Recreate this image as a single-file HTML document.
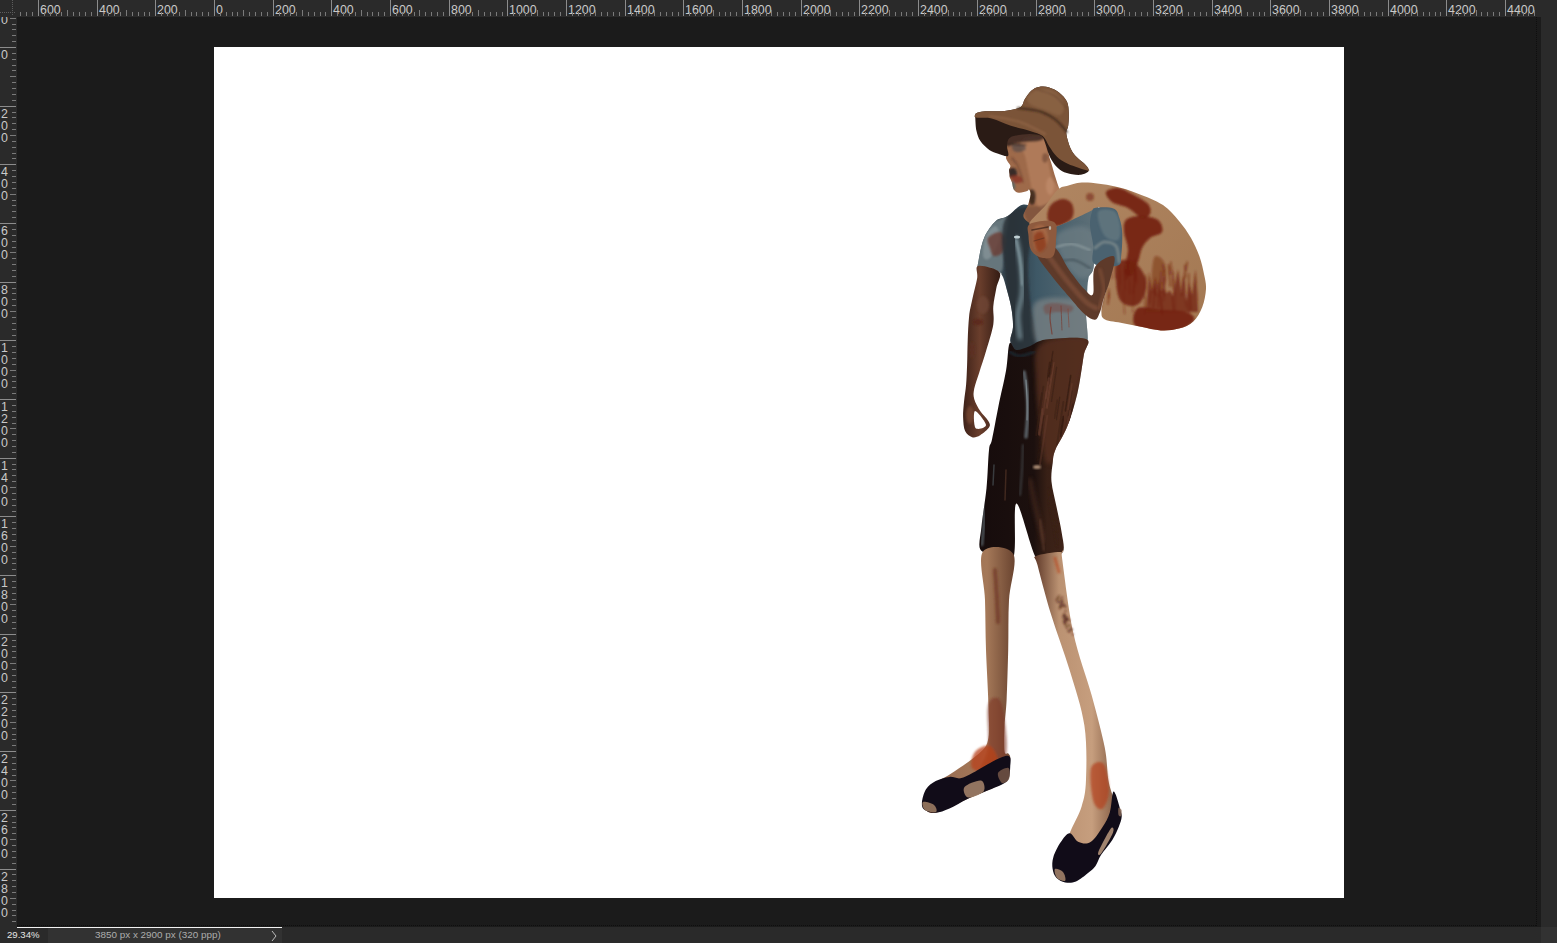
<!DOCTYPE html>
<html><head><meta charset="utf-8">
<style>
html,body{margin:0;padding:0;width:1557px;height:943px;overflow:hidden;background:#2a2a2a;font-family:"Liberation Sans",sans-serif;}
#wrap{position:relative;width:1557px;height:943px;}
.abs{position:absolute;}
#dark{left:17px;top:17px;width:1524px;height:910px;background:#1b1b1b;}
#canvas{left:214px;top:47px;width:1130px;height:851px;background:#fff;}
#rtop{left:0;top:0;width:1557px;height:17px;}
#rleft{left:0;top:0;width:17px;height:927px;}
svg text{font-family:"Liberation Sans",sans-serif;font-size:12.4px;fill:#c9c9c9;}
.mj{stroke:#8c8c8c;stroke-width:1;}
.mn{stroke:#7a7a7a;stroke-width:1;}
#status{left:0;top:927px;width:1557px;height:16px;background:#2a2a2a;}
#sline{left:17px;top:927px;width:265px;height:1px;background:#f2f2f2;}
#sbox{left:48px;top:928px;width:234px;height:15px;background:#323232;}
#zoom{left:7px;top:929px;font-size:9.6px;color:#e6e6e6;line-height:12px;}
#dims{left:95px;top:929px;font-size:9.9px;color:#adadad;line-height:12px;}
#fig{left:0;top:0;width:1557px;height:943px;}
</style></head><body><div id="wrap">
<div class="abs" id="dark"></div>
<div class="abs" id="canvas"></div>
<svg class="abs" id="fig" width="1557" height="943" viewBox="0 0 1557 943">
<defs>
<linearGradient id="gLegL" x1="0" y1="0" x2="1" y2="0"><stop offset="0" stop-color="#5a3424"/><stop offset="0.3" stop-color="#9c7054"/><stop offset="0.7" stop-color="#a47858"/><stop offset="1" stop-color="#6a4430"/></linearGradient>
<linearGradient id="gLegR" x1="0" y1="0" x2="1" y2="0"><stop offset="0" stop-color="#5e3828"/><stop offset="0.3" stop-color="#bb9272"/><stop offset="0.7" stop-color="#c69e7e"/><stop offset="1" stop-color="#825a42"/></linearGradient>
<linearGradient id="gPants" x1="0" y1="0" x2="1" y2="0"><stop offset="0" stop-color="#160c0c"/><stop offset="0.5" stop-color="#1c100e"/><stop offset="0.62" stop-color="#382016"/><stop offset="1" stop-color="#48281b"/></linearGradient>
<linearGradient id="gShirt" x1="0" y1="0" x2="1" y2="0"><stop offset="0" stop-color="#52646c"/><stop offset="0.3" stop-color="#2e3c46"/><stop offset="0.5" stop-color="#3e5866"/><stop offset="1" stop-color="#5e7078"/></linearGradient>
<linearGradient id="gSack" x1="0" y1="0" x2="1" y2="1"><stop offset="0" stop-color="#b08662"/><stop offset="1" stop-color="#a37852"/></linearGradient>
<linearGradient id="gArmL" x1="0" y1="0" x2="1" y2="0"><stop offset="0" stop-color="#3e2219"/><stop offset="0.45" stop-color="#6a3e2c"/><stop offset="1" stop-color="#341c14"/></linearGradient>
<linearGradient id="gNeck" x1="0" y1="0" x2="1" y2="0"><stop offset="0" stop-color="#5e3a2a"/><stop offset="0.5" stop-color="#9e6c4c"/><stop offset="1" stop-color="#b07a58"/></linearGradient>
<radialGradient id="gFace" cx="0.4" cy="0.45" r="0.6"><stop offset="0" stop-color="#b17c5a"/><stop offset="1" stop-color="#7a4c34"/></radialGradient>
<filter id="blur06"><feGaussianBlur stdDeviation="0.7"/></filter>
<filter id="blur1"><feGaussianBlur stdDeviation="1.2"/></filter>
<filter id="blur2"><feGaussianBlur stdDeviation="2.2"/></filter>
</defs>
<path d="M995.8 221.0 C999.6 217.5 1002.8 219.0 1007.3 216.3 C1011.8 213.6 1017.1 206.2 1022.6 204.8 C1028.0 203.4 1034.3 209.0 1040.0 208.0 C1045.7 207.0 1051.2 198.5 1057.0 199.0 C1062.8 199.5 1068.8 209.3 1075.0 211.0 C1081.2 212.7 1090.8 200.2 1094.0 209.0 C1097.2 217.8 1094.9 252.5 1094.0 264.0 C1093.1 275.5 1089.7 272.7 1088.5 278.0 C1087.3 283.3 1087.4 290.1 1087.0 296.0 C1086.6 301.9 1085.9 306.2 1086.0 313.7 C1086.1 321.2 1088.5 336.7 1087.5 341.0 C1086.5 345.3 1086.9 339.6 1080.0 339.5 C1073.1 339.4 1054.5 339.2 1046.0 340.5 C1037.5 341.8 1034.0 345.8 1029.0 347.5 C1024.0 349.2 1019.3 352.1 1016.2 351.0 C1013.1 349.9 1010.8 344.9 1010.3 341.0 C1009.8 337.1 1012.8 332.8 1013.0 327.3 C1013.2 321.8 1012.5 314.6 1011.4 308.2 C1010.3 301.8 1008.2 294.6 1006.6 289.0 C1005.0 283.4 1003.9 278.0 1001.8 274.8 C999.7 271.6 997.8 270.2 993.9 269.7 C990.0 269.2 981.1 273.2 978.6 271.6 C976.1 270.0 977.6 265.9 978.6 260.2 C979.6 254.5 981.5 243.8 984.4 237.3 C987.3 230.8 992.0 224.5 995.8 221.0Z" fill="url(#gShirt)" />
<g clip-path="url(#cShirt)">
<path d="M984.0 228.0 C987.7 222.0 996.0 220.7 1000.0 219.0 C1004.0 217.3 1007.3 213.7 1008.0 218.0 C1008.7 222.3 1005.2 236.0 1004.0 245.0 C1002.8 254.0 1005.0 267.7 1001.0 272.0 C997.0 276.3 983.8 273.8 980.0 271.0 C976.2 268.2 977.3 262.2 978.0 255.0 C978.7 247.8 980.3 234.0 984.0 228.0Z" fill="#66767c" filter="url(#blur1)"/>
<path d="M986.0 235.0 C988.2 230.0 993.8 225.2 996.0 226.0 C998.2 226.8 1000.0 234.7 999.0 240.0 C998.0 245.3 992.7 255.3 990.0 258.0 C987.3 260.7 983.7 259.8 983.0 256.0 C982.3 252.2 983.8 240.0 986.0 235.0Z" fill="#8a989c" filter="url(#blur1)" opacity="0.7"/>
<path d="M988.0 238.0 C989.7 235.3 997.0 231.7 1000.0 232.0 C1003.0 232.3 1005.5 236.7 1006.0 240.0 C1006.5 243.3 1005.0 249.3 1003.0 252.0 C1001.0 254.7 996.2 256.7 994.0 256.0 C991.8 255.3 991.0 251.0 990.0 248.0 C989.0 245.0 986.3 240.7 988.0 238.0Z" fill="#6a3a30" filter="url(#blur1)" opacity="0.8"/>
<path d="M979.0 270.0 C980.8 269.8 986.3 267.8 990.0 268.5 C993.7 269.2 999.2 273.1 1001.0 274.0" fill="none" stroke="#9aa0a0" stroke-width="2.2" stroke-linecap="round" opacity="0.8"/>
<path d="M1006.0 218.0 C1009.7 212.5 1018.0 208.0 1024.0 207.0 C1030.0 206.0 1040.3 207.8 1042.0 212.0 C1043.7 216.2 1036.3 224.0 1034.0 232.0 C1031.7 240.0 1028.7 248.7 1028.0 260.0 C1027.3 271.3 1028.7 285.8 1030.0 300.0 C1031.3 314.2 1038.8 336.7 1036.0 345.0 C1033.2 353.3 1017.7 357.5 1013.0 350.0 C1008.3 342.5 1009.5 315.0 1008.0 300.0 C1006.5 285.0 1005.0 270.0 1004.0 260.0 C1003.0 250.0 1001.7 247.0 1002.0 240.0 C1002.3 233.0 1002.3 223.5 1006.0 218.0Z" fill="#2a3038" filter="url(#blur1)" opacity="0.85"/>
<path d="M1016.0 238.0 C1016.5 240.3 1018.0 245.8 1019.0 252.0 C1020.0 258.2 1021.5 267.8 1022.0 275.0 C1022.5 282.2 1022.7 288.3 1022.0 295.0 C1021.3 301.7 1018.3 307.8 1018.0 315.0 C1017.7 322.2 1019.7 334.2 1020.0 338.0" fill="none" stroke="#7f98a0" stroke-width="3.5" stroke-linecap="round" filter="url(#blur2)"/>
<path d="M1016.0 240.0 C1016.7 243.3 1019.0 252.5 1020.0 260.0 C1021.0 267.5 1021.7 280.8 1022.0 285.0" fill="none" stroke="#9ab2b8" stroke-width="1.5" stroke-linecap="round" filter="url(#blur1)" opacity="0.8"/>
<ellipse cx="1017" cy="237" rx="3" ry="1.5" fill="#c0d0d4" filter="url(#blur06)"/>
<path d="M1056.0 236.0 C1058.7 230.0 1073.7 226.0 1080.0 226.0 C1086.3 226.0 1091.7 228.7 1094.0 236.0 C1096.3 243.3 1096.3 263.0 1094.0 270.0 C1091.7 277.0 1085.0 279.3 1080.0 278.0 C1075.0 276.7 1068.0 269.0 1064.0 262.0 C1060.0 255.0 1053.3 242.0 1056.0 236.0Z" fill="#6e7e84" filter="url(#blur2)" opacity="0.7"/>
<path d="M1056.0 247.0 C1058.7 246.5 1066.3 243.5 1072.0 244.0 C1077.7 244.5 1087.0 249.0 1090.0 250.0" fill="none" stroke="#98a6a8" stroke-width="2" stroke-linecap="round" filter="url(#blur1)" opacity="0.7"/>
<path d="M1058.0 262.0 C1060.7 261.7 1068.7 259.0 1074.0 260.0 C1079.3 261.0 1087.3 266.7 1090.0 268.0" fill="none" stroke="#3e4c54" stroke-width="2" stroke-linecap="round" filter="url(#blur1)" opacity="0.7"/>
<path d="M1036.0 302.0 C1040.5 298.3 1051.8 297.5 1060.0 298.0 C1068.2 298.5 1080.5 298.0 1085.0 305.0 C1089.5 312.0 1091.2 333.7 1087.0 340.0 C1082.8 346.3 1068.2 342.3 1060.0 343.0 C1051.8 343.7 1042.5 347.8 1038.0 344.0 C1033.5 340.2 1033.3 327.0 1033.0 320.0 C1032.7 313.0 1031.5 305.7 1036.0 302.0Z" fill="#7a8284" filter="url(#blur2)" opacity="0.75"/>
<path d="M1044.0 306.0 C1045.3 304.2 1049.3 303.0 1054.0 303.0 C1058.7 303.0 1069.3 304.5 1072.0 306.0 C1074.7 307.5 1072.8 311.0 1070.0 312.0 C1067.2 313.0 1059.0 311.7 1055.0 312.0 C1051.0 312.3 1047.8 315.0 1046.0 314.0 C1044.2 313.0 1042.7 307.8 1044.0 306.0Z" fill="#7a3a30" filter="url(#blur1)" opacity="0.4"/>
<path d="M1051.0 307.0 C1050.8 308.8 1049.8 313.5 1050.0 318.0 C1050.2 322.5 1051.7 331.3 1052.0 334.0" fill="none" stroke="#7a3428" stroke-width="1.2" stroke-linecap="round" filter="url(#blur06)" opacity="0.7"/>
<path d="M1061.0 306.0 C1061.2 310.0 1061.8 326.0 1062.0 330.0" fill="none" stroke="#7a3428" stroke-width="1" stroke-linecap="round" filter="url(#blur06)" opacity="0.6"/>
<path d="M1068.0 309.0 C1068.2 312.0 1068.8 324.0 1069.0 327.0" fill="none" stroke="#8a4030" stroke-width="1" stroke-linecap="round" filter="url(#blur06)" opacity="0.55"/>
</g>
<defs><clipPath id="cShirt"><path d="M995.8 221.0 C999.6 217.5 1002.8 219.0 1007.3 216.3 C1011.8 213.6 1017.1 206.2 1022.6 204.8 C1028.0 203.4 1034.3 209.0 1040.0 208.0 C1045.7 207.0 1051.2 198.5 1057.0 199.0 C1062.8 199.5 1068.8 209.3 1075.0 211.0 C1081.2 212.7 1090.8 200.2 1094.0 209.0 C1097.2 217.8 1094.9 252.5 1094.0 264.0 C1093.1 275.5 1089.7 272.7 1088.5 278.0 C1087.3 283.3 1087.4 290.1 1087.0 296.0 C1086.6 301.9 1085.9 306.2 1086.0 313.7 C1086.1 321.2 1088.5 336.7 1087.5 341.0 C1086.5 345.3 1086.9 339.6 1080.0 339.5 C1073.1 339.4 1054.5 339.2 1046.0 340.5 C1037.5 341.8 1034.0 345.8 1029.0 347.5 C1024.0 349.2 1019.3 352.1 1016.2 351.0 C1013.1 349.9 1010.8 344.9 1010.3 341.0 C1009.8 337.1 1012.8 332.8 1013.0 327.3 C1013.2 321.8 1012.5 314.6 1011.4 308.2 C1010.3 301.8 1008.2 294.6 1006.6 289.0 C1005.0 283.4 1003.9 278.0 1001.8 274.8 C999.7 271.6 997.8 270.2 993.9 269.7 C990.0 269.2 981.1 273.2 978.6 271.6 C976.1 270.0 977.6 265.9 978.6 260.2 C979.6 254.5 981.5 243.8 984.4 237.3 C987.3 230.8 992.0 224.5 995.8 221.0Z"/></clipPath></defs>
<path d="M1005.0 136.0 C1002.5 138.2 1004.7 141.5 1005.0 144.0 C1005.3 146.5 1006.6 148.7 1006.8 151.2 C1007.0 153.7 1005.6 156.4 1006.2 158.8 C1006.8 161.2 1009.8 163.8 1010.3 165.6 C1010.8 167.4 1009.1 168.5 1009.0 169.9 C1008.9 171.3 1009.4 172.7 1009.5 174.0 C1009.6 175.3 1009.4 176.1 1009.8 177.5 C1010.2 178.9 1011.4 180.6 1012.0 182.6 C1012.6 184.6 1012.6 187.7 1013.7 189.4 C1014.8 191.1 1016.5 192.5 1018.8 192.8 C1021.0 193.1 1025.5 191.7 1027.2 191.1 C1028.9 190.5 1028.4 188.8 1029.0 189.4 C1029.6 190.0 1030.8 191.9 1030.6 194.5 C1030.4 197.1 1029.2 201.3 1028.0 205.0 C1026.8 208.7 1022.7 213.5 1023.5 216.7 C1024.3 219.9 1029.2 223.1 1033.0 224.4 C1036.8 225.7 1041.4 229.1 1046.4 224.4 C1051.4 219.7 1060.7 201.8 1062.9 196.0 C1065.1 190.2 1060.7 192.5 1059.5 189.4 C1058.3 186.3 1056.7 181.2 1055.5 177.5 C1054.3 173.8 1053.2 169.9 1052.5 167.3 C1051.8 164.8 1051.6 164.2 1051.0 162.2 C1050.4 160.2 1049.7 159.2 1049.0 155.5 C1048.3 151.8 1048.2 144.1 1047.0 140.0 C1045.8 135.9 1046.5 132.5 1042.0 131.0 C1037.5 129.5 1026.2 130.2 1020.0 131.0 C1013.8 131.8 1007.5 133.8 1005.0 136.0Z" fill="#9e6a4a" />
<defs><clipPath id="cFace"><path d="M1005.0 136.0 C1002.5 138.2 1004.7 141.5 1005.0 144.0 C1005.3 146.5 1006.6 148.7 1006.8 151.2 C1007.0 153.7 1005.6 156.4 1006.2 158.8 C1006.8 161.2 1009.8 163.8 1010.3 165.6 C1010.8 167.4 1009.1 168.5 1009.0 169.9 C1008.9 171.3 1009.4 172.7 1009.5 174.0 C1009.6 175.3 1009.4 176.1 1009.8 177.5 C1010.2 178.9 1011.4 180.6 1012.0 182.6 C1012.6 184.6 1012.6 187.7 1013.7 189.4 C1014.8 191.1 1016.5 192.5 1018.8 192.8 C1021.0 193.1 1025.5 191.7 1027.2 191.1 C1028.9 190.5 1028.4 188.8 1029.0 189.4 C1029.6 190.0 1030.8 191.9 1030.6 194.5 C1030.4 197.1 1029.2 201.3 1028.0 205.0 C1026.8 208.7 1022.7 213.5 1023.5 216.7 C1024.3 219.9 1029.2 223.1 1033.0 224.4 C1036.8 225.7 1041.4 229.1 1046.4 224.4 C1051.4 219.7 1060.7 201.8 1062.9 196.0 C1065.1 190.2 1060.7 192.5 1059.5 189.4 C1058.3 186.3 1056.7 181.2 1055.5 177.5 C1054.3 173.8 1053.2 169.9 1052.5 167.3 C1051.8 164.8 1051.6 164.2 1051.0 162.2 C1050.4 160.2 1049.7 159.2 1049.0 155.5 C1048.3 151.8 1048.2 144.1 1047.0 140.0 C1045.8 135.9 1046.5 132.5 1042.0 131.0 C1037.5 129.5 1026.2 130.2 1020.0 131.0 C1013.8 131.8 1007.5 133.8 1005.0 136.0Z"/></clipPath></defs>
<g clip-path="url(#cFace)" filter="url(#blur1)">
<path d="M1022.0 140.0 C1025.0 136.3 1039.7 134.7 1044.0 138.0 C1048.3 141.3 1046.7 153.3 1048.0 160.0 C1049.3 166.7 1049.7 172.2 1052.0 178.0 C1054.3 183.8 1063.2 189.7 1062.0 195.0 C1060.8 200.3 1049.5 209.2 1045.0 210.0 C1040.5 210.8 1037.5 205.0 1035.0 200.0 C1032.5 195.0 1031.5 186.7 1030.0 180.0 C1028.5 173.3 1027.3 166.7 1026.0 160.0 C1024.7 153.3 1019.0 143.7 1022.0 140.0Z" fill="#bb8664" opacity="0.6"/>
<path d="M1004.0 132.0 C1010.3 129.7 1037.7 130.7 1044.0 132.0 C1050.3 133.3 1044.7 138.3 1042.0 140.0 C1039.3 141.7 1032.3 141.5 1028.0 142.0 C1023.7 142.5 1019.7 142.3 1016.0 143.0 C1012.3 143.7 1008.0 147.8 1006.0 146.0 C1004.0 144.2 997.7 134.3 1004.0 132.0Z" fill="#3a2620" opacity="0.85"/>
<path d="M1012.0 145.0 C1013.3 143.8 1019.7 143.3 1022.0 144.0 C1024.3 144.7 1026.3 147.7 1026.0 149.0 C1025.7 150.3 1022.0 151.7 1020.0 152.0 C1018.0 152.3 1015.3 152.2 1014.0 151.0 C1012.7 149.8 1010.7 146.2 1012.0 145.0Z" fill="#4a4448" opacity="0.6"/>
<path d="M1008.0 144.0 C1011.0 144.2 1023.0 144.8 1026.0 145.0" fill="none" stroke="#2e201c" stroke-width="1.5" stroke-linecap="round" opacity="0.7"/>
<path d="M1012.0 158.0 C1012.7 158.8 1015.3 162.2 1016.0 163.0" fill="none" stroke="#5a3628" stroke-width="1.4" stroke-linecap="round" opacity="0.7"/>
<path d="M1017.0 164.0 C1017.5 165.3 1019.0 169.0 1020.0 172.0 C1021.0 175.0 1022.5 180.3 1023.0 182.0" fill="none" stroke="#5a3628" stroke-width="1.5" stroke-linecap="round" opacity="0.55"/>
<path d="M1008.5 169.5 C1009.3 168.1 1013.6 167.5 1015.0 168.5 C1016.4 169.5 1017.8 174.1 1017.0 175.5 C1016.2 176.9 1011.4 178.0 1010.0 177.0 C1008.6 176.0 1007.7 170.9 1008.5 169.5Z" fill="#2e2224" opacity="0.9"/>
<path d="M1011.0 176.0 C1011.7 174.8 1017.0 175.2 1019.0 176.0 C1021.0 176.8 1023.7 179.8 1023.0 181.0 C1022.3 182.2 1017.0 183.8 1015.0 183.0 C1013.0 182.2 1010.3 177.2 1011.0 176.0Z" fill="#8a3626" opacity="0.8"/>
<ellipse cx="1012.5" cy="186" rx="2.5" ry="4.5" fill="#2e6272" opacity="0.6"/>
<ellipse cx="1032" cy="197" rx="4" ry="8" fill="#2a1a14" opacity="0.75"/>
<ellipse cx="1045" cy="158" rx="3" ry="5" fill="#6a4230" opacity="0.6"/>
<ellipse cx="1050" cy="186" rx="4" ry="9" fill="#c89272" opacity="0.5"/>
<path d="M1024.0 208.0 C1025.7 205.0 1034.7 207.0 1040.0 206.0 C1045.3 205.0 1054.7 199.0 1056.0 202.0 C1057.3 205.0 1052.3 220.3 1048.0 224.0 C1043.7 227.7 1034.0 226.7 1030.0 224.0 C1026.0 221.3 1022.3 211.0 1024.0 208.0Z" fill="#6a4030" opacity="0.5"/>
</g>
<path d="M1029.5 223.0 C1030.7 219.4 1040.7 211.0 1045.4 205.4 C1050.2 199.8 1054.2 192.8 1058.0 189.5 C1061.8 186.2 1063.9 186.7 1068.4 185.5 C1072.9 184.3 1077.4 182.5 1085.0 182.6 C1092.6 182.7 1105.2 184.4 1114.0 186.2 C1122.8 188.0 1129.3 190.3 1137.5 193.4 C1145.7 196.5 1156.1 200.4 1163.0 205.0 C1169.9 209.6 1174.3 215.5 1179.0 221.0 C1183.7 226.5 1187.6 232.1 1191.0 238.0 C1194.4 243.9 1197.3 250.4 1199.5 256.5 C1201.7 262.6 1203.0 269.1 1204.1 274.5 C1205.2 279.9 1206.3 283.5 1206.0 288.9 C1205.7 294.3 1204.4 301.5 1202.3 306.9 C1200.2 312.3 1197.2 317.8 1193.3 321.4 C1189.4 325.0 1184.3 327.1 1178.9 328.6 C1173.5 330.1 1167.2 330.7 1160.9 330.4 C1154.6 330.1 1147.4 328.0 1141.1 326.8 C1134.8 325.6 1129.1 324.4 1123.1 323.2 C1117.1 322.0 1108.6 321.3 1105.0 319.5 C1101.4 317.7 1101.6 315.9 1101.4 312.3 C1101.2 308.7 1102.7 303.2 1104.0 298.0 C1105.3 292.8 1107.5 287.0 1109.0 281.0 C1110.5 275.0 1112.8 269.7 1113.0 262.0 C1113.2 254.3 1112.2 243.8 1110.0 235.0 C1107.8 226.2 1102.3 213.4 1100.0 209.0 C1097.7 204.6 1100.9 206.8 1096.3 208.6 C1091.7 210.4 1079.9 216.5 1072.5 219.7 C1065.1 222.9 1057.5 226.5 1051.8 227.7 C1046.0 228.9 1041.7 227.8 1038.0 227.0 C1034.3 226.2 1028.3 226.6 1029.5 223.0Z" fill="url(#gSack)" />
<defs><clipPath id="cSack"><path d="M1029.5 223.0 C1030.7 219.4 1040.7 211.0 1045.4 205.4 C1050.2 199.8 1054.2 192.8 1058.0 189.5 C1061.8 186.2 1063.9 186.7 1068.4 185.5 C1072.9 184.3 1077.4 182.5 1085.0 182.6 C1092.6 182.7 1105.2 184.4 1114.0 186.2 C1122.8 188.0 1129.3 190.3 1137.5 193.4 C1145.7 196.5 1156.1 200.4 1163.0 205.0 C1169.9 209.6 1174.3 215.5 1179.0 221.0 C1183.7 226.5 1187.6 232.1 1191.0 238.0 C1194.4 243.9 1197.3 250.4 1199.5 256.5 C1201.7 262.6 1203.0 269.1 1204.1 274.5 C1205.2 279.9 1206.3 283.5 1206.0 288.9 C1205.7 294.3 1204.4 301.5 1202.3 306.9 C1200.2 312.3 1197.2 317.8 1193.3 321.4 C1189.4 325.0 1184.3 327.1 1178.9 328.6 C1173.5 330.1 1167.2 330.7 1160.9 330.4 C1154.6 330.1 1147.4 328.0 1141.1 326.8 C1134.8 325.6 1129.1 324.4 1123.1 323.2 C1117.1 322.0 1108.6 321.3 1105.0 319.5 C1101.4 317.7 1101.6 315.9 1101.4 312.3 C1101.2 308.7 1102.7 303.2 1104.0 298.0 C1105.3 292.8 1107.5 287.0 1109.0 281.0 C1110.5 275.0 1112.8 269.7 1113.0 262.0 C1113.2 254.3 1112.2 243.8 1110.0 235.0 C1107.8 226.2 1102.3 213.4 1100.0 209.0 C1097.7 204.6 1100.9 206.8 1096.3 208.6 C1091.7 210.4 1079.9 216.5 1072.5 219.7 C1065.1 222.9 1057.5 226.5 1051.8 227.7 C1046.0 228.9 1041.7 227.8 1038.0 227.0 C1034.3 226.2 1028.3 226.6 1029.5 223.0Z"/></clipPath></defs>
<g clip-path="url(#cSack)" filter="url(#blur1)">
<path d="M1106.0 192.0 C1107.0 189.7 1113.7 187.7 1118.0 188.0 C1122.3 188.3 1127.0 191.3 1132.0 194.0 C1137.0 196.7 1145.0 200.7 1148.0 204.0 C1151.0 207.3 1151.0 211.7 1150.0 214.0 C1149.0 216.3 1145.7 219.0 1142.0 218.0 C1138.3 217.0 1133.0 210.7 1128.0 208.0 C1123.0 205.3 1115.7 204.7 1112.0 202.0 C1108.3 199.3 1105.0 194.3 1106.0 192.0Z" fill="#72200e" opacity="0.9"/>
<ellipse cx="1090" cy="197" rx="4" ry="4" fill="#72200e" opacity="0.55"/>
<path d="M1050.0 206.0 C1052.3 202.5 1058.3 199.3 1062.0 199.0 C1065.7 198.7 1070.3 200.8 1072.0 204.0 C1073.7 207.2 1074.3 214.3 1072.0 218.0 C1069.7 221.7 1062.0 225.7 1058.0 226.0 C1054.0 226.3 1049.3 223.3 1048.0 220.0 C1046.7 216.7 1047.7 209.5 1050.0 206.0Z" fill="#72200e" opacity="0.85"/>
<path d="M1126.0 220.0 C1128.7 217.3 1134.7 216.0 1140.0 216.0 C1145.3 216.0 1154.3 217.3 1158.0 220.0 C1161.7 222.7 1163.3 229.0 1162.0 232.0 C1160.7 235.0 1153.3 235.3 1150.0 238.0 C1146.7 240.7 1144.0 244.0 1142.0 248.0 C1140.0 252.0 1139.7 257.5 1138.0 262.0 C1136.3 266.5 1134.3 273.3 1132.0 275.0 C1129.7 276.7 1124.7 276.2 1124.0 272.0 C1123.3 267.8 1128.0 256.7 1128.0 250.0 C1128.0 243.3 1124.3 237.0 1124.0 232.0 C1123.7 227.0 1123.3 222.7 1126.0 220.0Z" fill="#72200e" opacity="0.9"/>
<path d="M1118.0 262.0 C1121.0 259.0 1129.3 259.0 1134.0 262.0 C1138.7 265.0 1144.7 273.7 1146.0 280.0 C1147.3 286.3 1144.3 295.7 1142.0 300.0 C1139.7 304.3 1135.7 306.0 1132.0 306.0 C1128.3 306.0 1122.7 304.3 1120.0 300.0 C1117.3 295.7 1116.3 286.3 1116.0 280.0 C1115.7 273.7 1115.0 265.0 1118.0 262.0Z" fill="#72200e" opacity="0.85"/>
<path d="M1154.0 258.0 C1156.0 253.3 1162.0 258.3 1164.0 262.0 C1166.0 265.7 1166.7 274.3 1166.0 280.0 C1165.3 285.7 1162.3 294.3 1160.0 296.0 C1157.7 297.7 1153.0 296.3 1152.0 290.0 C1151.0 283.7 1152.0 262.7 1154.0 258.0Z" fill="#72200e" opacity="0.45"/>
<path d="M1146.0 312.0 L1149.0 271.6 L1152.1 291.0 L1155.7 276.8 L1157.4 297.1 L1159.5 278.4 L1161.1 291.3 L1164.4 287.8 L1166.2 293.1 L1170.1 290.7 L1173.0 295.6 L1178.0 269.1 L1181.6 294.1 L1184.1 270.8 L1186.3 301.4 L1188.9 282.0 L1192.0 295.2 L1195.6 269.5 L1197.3 292.9 L1198.0 312.0Z" fill="#72200e" opacity="0.75"/>
<path d="M1138.0 308.0 C1142.3 305.7 1152.0 309.3 1160.0 310.0 C1168.0 310.7 1180.3 310.3 1186.0 312.0 C1191.7 313.7 1195.3 316.8 1194.0 320.0 C1192.7 323.2 1185.3 328.8 1178.0 331.0 C1170.7 333.2 1157.3 334.2 1150.0 333.0 C1142.7 331.8 1136.0 328.2 1134.0 324.0 C1132.0 319.8 1133.7 310.3 1138.0 308.0Z" fill="#72200e" opacity="0.9"/>
<path d="M1129.4 280.9 C1129.5 283.0 1129.8 291.4 1129.8 293.5" fill="none" stroke="#72200e" stroke-width="1.3005762432864434" stroke-linecap="round" opacity="0.43"/>
<path d="M1109.2 293.2 C1109.0 295.0 1108.3 302.1 1108.1 303.8" fill="none" stroke="#72200e" stroke-width="1.5965158684083702" stroke-linecap="round" opacity="0.61"/>
<path d="M1183.3 278.0 C1183.0 280.9 1182.1 292.6 1181.9 295.5" fill="none" stroke="#72200e" stroke-width="1.3078885266281508" stroke-linecap="round" opacity="0.79"/>
<path d="M1155.1 289.1 C1154.8 292.1 1153.6 304.2 1153.3 307.2" fill="none" stroke="#72200e" stroke-width="1.406584197029454" stroke-linecap="round" opacity="0.67"/>
<path d="M1135.1 259.3 C1135.1 262.9 1135.0 277.3 1135.0 280.9" fill="none" stroke="#72200e" stroke-width="1.3750591392526426" stroke-linecap="round" opacity="0.80"/>
<path d="M1172.3 296.7 C1172.5 298.9 1173.3 307.6 1173.5 309.8" fill="none" stroke="#72200e" stroke-width="1.1556968448406086" stroke-linecap="round" opacity="0.82"/>
<path d="M1187.1 262.1 C1186.9 263.5 1186.2 269.1 1186.0 270.5" fill="none" stroke="#72200e" stroke-width="1.5723841111185624" stroke-linecap="round" opacity="0.60"/>
<path d="M1164.4 270.6 C1164.3 273.2 1164.0 283.3 1163.9 285.8" fill="none" stroke="#72200e" stroke-width="1.080728391016144" stroke-linecap="round" opacity="0.66"/>
<path d="M1160.6 296.0 C1160.9 299.0 1162.0 311.2 1162.3 314.3" fill="none" stroke="#72200e" stroke-width="1.4851204531174047" stroke-linecap="round" opacity="0.85"/>
<path d="M1168.4 264.9 C1168.7 268.4 1170.0 282.8 1170.3 286.3" fill="none" stroke="#72200e" stroke-width="1.5237567876097895" stroke-linecap="round" opacity="0.66"/>
<path d="M1172.2 266.9 C1172.3 270.4 1172.5 284.3 1172.5 287.8" fill="none" stroke="#72200e" stroke-width="1.0279659695889642" stroke-linecap="round" opacity="0.43"/>
<path d="M1184.9 299.6 C1185.1 300.8 1185.9 305.9 1186.1 307.2" fill="none" stroke="#72200e" stroke-width="1.1283694618767273" stroke-linecap="round" opacity="0.47"/>
<path d="M1134.5 290.3 C1134.1 293.9 1132.9 308.4 1132.6 312.0" fill="none" stroke="#72200e" stroke-width="1.291626022825447" stroke-linecap="round" opacity="0.42"/>
<path d="M1172.7 271.9 C1173.0 275.5 1174.3 290.1 1174.6 293.8" fill="none" stroke="#72200e" stroke-width="1.2043362989184354" stroke-linecap="round" opacity="0.85"/>
<path d="M1135.9 261.2 C1135.6 264.0 1134.3 275.2 1134.0 278.0" fill="none" stroke="#72200e" stroke-width="0.9579078851427356" stroke-linecap="round" opacity="0.58"/>
<path d="M1162.9 264.6 C1163.2 265.7 1164.2 270.2 1164.4 271.3" fill="none" stroke="#72200e" stroke-width="1.0510644159328735" stroke-linecap="round" opacity="0.83"/>
<path d="M1188.7 273.9 C1188.7 276.2 1188.8 285.8 1188.8 288.2" fill="none" stroke="#72200e" stroke-width="1.3151109747101817" stroke-linecap="round" opacity="0.67"/>
<path d="M1158.3 284.0 C1158.3 287.9 1158.4 303.2 1158.4 307.0" fill="none" stroke="#72200e" stroke-width="1.1449532427447462" stroke-linecap="round" opacity="0.72"/>
<path d="M1129.4 270.6 C1129.4 274.6 1129.5 290.3 1129.5 294.2" fill="none" stroke="#72200e" stroke-width="1.23874437414949" stroke-linecap="round" opacity="0.41"/>
<path d="M1145.4 282.4 C1145.4 283.4 1145.8 287.7 1145.8 288.7" fill="none" stroke="#72200e" stroke-width="1.3057444282368924" stroke-linecap="round" opacity="0.43"/>
<path d="M1164.5 277.6 C1164.4 280.6 1164.0 292.8 1163.9 295.8" fill="none" stroke="#72200e" stroke-width="1.3655601994927191" stroke-linecap="round" opacity="0.73"/>
<path d="M1110.0 260.5 C1110.3 263.6 1111.5 275.7 1111.8 278.7" fill="none" stroke="#72200e" stroke-width="1.0008978225467762" stroke-linecap="round" opacity="0.61"/>
<path d="M1161.3 271.4 C1161.2 273.5 1160.7 281.9 1160.6 284.0" fill="none" stroke="#72200e" stroke-width="1.0953231802215633" stroke-linecap="round" opacity="0.67"/>
<path d="M1135.0 273.8 C1134.7 277.2 1133.5 290.4 1133.1 293.7" fill="none" stroke="#72200e" stroke-width="1.2554064016564659" stroke-linecap="round" opacity="0.73"/>
<path d="M1135.9 267.3 C1135.7 270.8 1135.0 284.4 1134.9 287.8" fill="none" stroke="#72200e" stroke-width="0.9499154727343536" stroke-linecap="round" opacity="0.60"/>
<path d="M1170.8 262.3 C1170.7 264.2 1170.3 272.1 1170.2 274.1" fill="none" stroke="#72200e" stroke-width="1.4668311132458471" stroke-linecap="round" opacity="0.60"/>
<path d="M1185.0 265.1 C1185.1 267.1 1185.5 275.2 1185.6 277.2" fill="none" stroke="#72200e" stroke-width="1.507918617537031" stroke-linecap="round" opacity="0.60"/>
<path d="M1128.3 263.1 C1128.0 265.7 1127.2 276.0 1127.0 278.6" fill="none" stroke="#72200e" stroke-width="1.445421790100366" stroke-linecap="round" opacity="0.78"/>
<path d="M1124.5 269.7 C1124.6 273.1 1125.0 286.8 1125.1 290.2" fill="none" stroke="#72200e" stroke-width="1.4450062729080442" stroke-linecap="round" opacity="0.56"/>
<path d="M1119.7 270.3 C1119.5 273.6 1118.9 287.2 1118.8 290.6" fill="none" stroke="#72200e" stroke-width="1.0770834245334828" stroke-linecap="round" opacity="0.59"/>
<path d="M1145.8 275.2 C1145.6 279.0 1144.6 294.0 1144.4 297.8" fill="none" stroke="#72200e" stroke-width="0.8037294356665166" stroke-linecap="round" opacity="0.82"/>
<path d="M1187.2 299.5 C1187.5 301.8 1188.7 311.0 1189.0 313.3" fill="none" stroke="#72200e" stroke-width="1.5419017715290708" stroke-linecap="round" opacity="0.50"/>
<path d="M1175.1 293.1 C1175.1 296.1 1175.2 308.1 1175.2 311.1" fill="none" stroke="#72200e" stroke-width="1.0312334689132039" stroke-linecap="round" opacity="0.55"/>
<path d="M1128.5 260.9 C1128.3 263.6 1127.8 274.7 1127.6 277.5" fill="none" stroke="#72200e" stroke-width="1.4481535032065747" stroke-linecap="round" opacity="0.42"/>
<path d="M1189.3 287.1 C1189.6 290.9 1190.6 306.0 1190.9 309.8" fill="none" stroke="#72200e" stroke-width="1.5197398688190384" stroke-linecap="round" opacity="0.66"/>
<path d="M1109.2 289.3 C1109.0 290.8 1108.5 296.9 1108.4 298.4" fill="none" stroke="#72200e" stroke-width="1.3303168834438626" stroke-linecap="round" opacity="0.64"/>
<path d="M1145.2 297.4 C1145.1 300.3 1144.7 311.6 1144.6 314.5" fill="none" stroke="#72200e" stroke-width="1.001979875397625" stroke-linecap="round" opacity="0.79"/>
<path d="M1150.9 290.9 C1150.7 292.9 1149.9 301.1 1149.7 303.2" fill="none" stroke="#72200e" stroke-width="1.2277096324422216" stroke-linecap="round" opacity="0.77"/>
<path d="M1123.4 291.3 C1123.6 295.0 1124.4 310.1 1124.6 313.8" fill="none" stroke="#72200e" stroke-width="1.4587990100428647" stroke-linecap="round" opacity="0.40"/>
<path d="M1164.6 294.2 C1164.4 295.4 1163.8 300.0 1163.7 301.1" fill="none" stroke="#72200e" stroke-width="1.0148688889628" stroke-linecap="round" opacity="0.64"/>
<path d="M1146.1 277.9 C1145.7 281.2 1144.4 294.5 1144.1 297.8" fill="none" stroke="#72200e" stroke-width="0.8438668714478346" stroke-linecap="round" opacity="0.46"/>
<path d="M1119.2 260.9 C1119.5 264.8 1120.4 280.5 1120.6 284.4" fill="none" stroke="#72200e" stroke-width="0.8689024061882766" stroke-linecap="round" opacity="0.63"/>
<path d="M1136.4 271.2 C1136.5 273.3 1136.9 281.5 1137.0 283.5" fill="none" stroke="#72200e" stroke-width="1.269290496731509" stroke-linecap="round" opacity="0.56"/>
<path d="M1125.2 271.8 C1125.2 273.2 1125.4 278.7 1125.4 280.0" fill="none" stroke="#72200e" stroke-width="1.3728342576208084" stroke-linecap="round" opacity="0.57"/>
<path d="M1115.2 265.5 C1115.3 267.6 1115.5 276.1 1115.6 278.2" fill="none" stroke="#72200e" stroke-width="1.426097467788003" stroke-linecap="round" opacity="0.57"/>
</g>
<path d="M1096.0 207.8 C1099.7 207.2 1110.1 206.9 1114.0 208.7 C1117.9 210.5 1118.1 214.5 1119.5 218.6 C1120.9 222.7 1121.9 227.1 1122.2 233.1 C1122.5 239.1 1122.0 249.3 1121.3 254.7 C1120.5 260.1 1122.2 264.0 1117.7 265.5 C1113.2 267.0 1098.3 267.0 1094.2 263.7 C1090.1 260.4 1094.0 252.1 1093.3 245.7 C1092.6 239.2 1090.2 230.6 1090.0 225.0 C1089.8 219.4 1091.0 214.9 1092.0 212.0 C1093.0 209.1 1092.3 208.4 1096.0 207.8Z" fill="#4a6270" />
<path d="M1098.0 212.0 C1099.7 208.0 1110.3 208.8 1114.0 211.0 C1117.7 213.2 1119.3 220.2 1120.0 225.0 C1120.7 229.8 1120.7 238.3 1118.0 240.0 C1115.3 241.7 1107.3 239.7 1104.0 235.0 C1100.7 230.3 1096.3 216.0 1098.0 212.0Z" fill="#647880" filter="url(#blur1)" opacity="0.8"/>
<path d="M1095.0 248.0 C1096.5 247.0 1100.5 242.3 1104.0 242.0 C1107.5 241.7 1113.5 242.7 1116.0 246.0 C1118.5 249.3 1118.5 259.3 1119.0 262.0" fill="none" stroke="#7d8a8c" stroke-width="3" stroke-linecap="round" filter="url(#blur1)" opacity="0.8"/>
<path d="M978.2 266.0 C974.5 267.0 978.2 272.4 977.2 278.1 C976.2 283.8 973.5 293.9 972.1 300.3 C970.8 306.7 969.8 309.7 969.1 316.4 C968.4 323.1 968.0 332.4 967.7 340.5 C967.4 348.6 967.4 357.3 967.1 364.7 C966.8 372.1 966.6 378.8 966.1 384.8 C965.6 390.8 964.6 395.5 964.1 400.9 C963.6 406.3 962.9 412.0 963.1 417.0 C963.3 422.0 963.6 427.7 965.1 431.1 C966.6 434.5 969.6 436.5 972.1 437.2 C974.6 437.9 977.3 436.9 980.2 435.2 C983.1 433.5 987.9 429.5 989.3 427.1 C990.6 424.7 989.8 423.7 988.3 421.0 C986.8 418.3 982.6 414.7 980.2 411.0 C977.9 407.3 975.2 402.6 974.2 398.9 C973.2 395.2 973.4 393.2 974.2 388.8 C975.0 384.4 977.2 379.1 979.2 372.7 C981.2 366.3 983.9 358.7 986.2 350.6 C988.6 342.6 992.1 331.8 993.3 324.4 C994.5 317.0 992.8 312.3 993.3 306.3 C993.8 300.3 995.3 293.9 996.3 288.2 C997.3 282.5 1002.3 275.8 999.3 272.1 C996.3 268.4 981.9 265.0 978.2 266.0Z" fill="url(#gArmL)" />
<g clip-path="url(#cArm)" filter="url(#blur1)">
<ellipse cx="983" cy="305" rx="6" ry="9" fill="#6e4434" opacity="0.8"/>
<ellipse cx="978" cy="322" rx="5" ry="3" fill="#5a2418" opacity="0.8"/>
<ellipse cx="972" cy="350" rx="3" ry="8" fill="#5e3022" opacity="0.7"/>
<ellipse cx="970" cy="415" rx="4" ry="9" fill="#7a4a34" opacity="0.7"/>
</g>
<defs><clipPath id="cArm"><path d="M978.2 266.0 C974.5 267.0 978.2 272.4 977.2 278.1 C976.2 283.8 973.5 293.9 972.1 300.3 C970.8 306.7 969.8 309.7 969.1 316.4 C968.4 323.1 968.0 332.4 967.7 340.5 C967.4 348.6 967.4 357.3 967.1 364.7 C966.8 372.1 966.6 378.8 966.1 384.8 C965.6 390.8 964.6 395.5 964.1 400.9 C963.6 406.3 962.9 412.0 963.1 417.0 C963.3 422.0 963.6 427.7 965.1 431.1 C966.6 434.5 969.6 436.5 972.1 437.2 C974.6 437.9 977.3 436.9 980.2 435.2 C983.1 433.5 987.9 429.5 989.3 427.1 C990.6 424.7 989.8 423.7 988.3 421.0 C986.8 418.3 982.6 414.7 980.2 411.0 C977.9 407.3 975.2 402.6 974.2 398.9 C973.2 395.2 973.4 393.2 974.2 388.8 C975.0 384.4 977.2 379.1 979.2 372.7 C981.2 366.3 983.9 358.7 986.2 350.6 C988.6 342.6 992.1 331.8 993.3 324.4 C994.5 317.0 992.8 312.3 993.3 306.3 C993.8 300.3 995.3 293.9 996.3 288.2 C997.3 282.5 1002.3 275.8 999.3 272.1 C996.3 268.4 981.9 265.0 978.2 266.0Z"/></clipPath></defs>
<path d="M975.0 411.0 C976.8 410.5 985.9 422.2 986.0 425.0 C986.1 427.8 977.3 430.3 975.5 428.0 C973.7 425.7 973.2 411.5 975.0 411.0Z" fill="#fff" />
<path d="M1054.0 247.0 C1059.4 249.9 1064.2 263.1 1069.3 270.2 C1074.4 277.2 1080.5 285.3 1084.5 289.3 C1088.5 293.3 1091.2 297.7 1093.0 294.0 C1094.8 290.3 1091.5 273.2 1095.0 267.0 C1098.5 260.8 1111.5 254.3 1114.0 256.5 C1116.5 258.7 1111.8 272.8 1110.0 280.0 C1108.2 287.2 1104.9 294.4 1103.2 299.7 C1101.5 305.0 1101.4 308.6 1100.0 312.0 C1098.6 315.4 1097.6 319.4 1095.0 319.8 C1092.4 320.2 1088.8 317.9 1084.5 314.1 C1080.2 310.3 1075.0 303.7 1069.3 297.0 C1063.6 290.3 1055.6 281.3 1050.2 274.0 C1044.8 266.7 1036.2 257.5 1036.8 253.0 C1037.4 248.5 1048.6 244.1 1054.0 247.0Z" fill="#5e3a2a" />
<path d="M1050.0 258.0 C1053.0 262.0 1062.0 274.7 1068.0 282.0 C1074.0 289.3 1081.3 297.7 1086.0 302.0 C1090.7 306.3 1094.3 307.0 1096.0 308.0" fill="none" stroke="#7c4e38" stroke-width="5" stroke-linecap="round" filter="url(#blur1)" opacity="0.8"/>
<path d="M1100.0 270.0 C1100.7 273.3 1104.2 283.7 1104.0 290.0 C1103.8 296.3 1099.8 305.0 1099.0 308.0" fill="none" stroke="#7a4c36" stroke-width="4" stroke-linecap="round" filter="url(#blur1)" opacity="0.7"/>
<path d="M1030.0 224.0 C1034.2 221.7 1049.7 219.3 1054.0 222.0 C1058.3 224.7 1056.2 234.3 1056.0 240.0 C1055.8 245.7 1055.5 253.4 1053.0 256.3 C1050.5 259.2 1044.4 258.6 1040.7 257.5 C1037.0 256.4 1033.0 253.6 1031.0 250.0 C1029.0 246.4 1028.7 240.3 1028.5 236.0 C1028.3 231.7 1025.8 226.3 1030.0 224.0Z" fill="#8e5a3e" />
<path d="M1034.0 228.0 C1035.7 224.7 1041.7 224.0 1044.0 226.0 C1046.3 228.0 1048.7 235.7 1048.0 240.0 C1047.3 244.3 1042.3 251.0 1040.0 252.0 C1037.7 253.0 1035.0 250.0 1034.0 246.0 C1033.0 242.0 1032.3 231.3 1034.0 228.0Z" fill="#a86a46" filter="url(#blur1)" opacity="0.85"/>
<path d="M1034.0 236.0 C1034.7 232.7 1040.0 230.3 1042.0 232.0 C1044.0 233.7 1046.7 242.7 1046.0 246.0 C1045.3 249.3 1040.0 253.7 1038.0 252.0 C1036.0 250.3 1033.3 239.3 1034.0 236.0Z" fill="#8a3418" filter="url(#blur1)" opacity="0.7"/>
<path d="M1032.0 230.0 C1034.7 229.5 1045.3 227.5 1048.0 227.0" fill="none" stroke="#3a221a" stroke-width="1.6" stroke-linecap="round" opacity="0.7"/>
<path d="M1034.0 241.0 C1035.7 240.5 1042.3 238.5 1044.0 238.0" fill="none" stroke="#4a2a20" stroke-width="1.2" stroke-linecap="round" opacity="0.5"/>
<ellipse cx="1050" cy="228" rx="1.2" ry="2" fill="#c8c8c0" opacity="0.8"/>
<path d="M1009.5 343.5 C1011.2 340.1 1013.0 349.5 1016.2 350.0 C1019.5 350.5 1024.0 348.2 1029.0 346.5 C1034.0 344.8 1036.5 340.8 1046.0 339.5 C1055.5 338.2 1079.7 336.3 1086.0 339.0 C1092.3 341.7 1085.2 346.4 1083.7 355.5 C1082.2 364.6 1080.1 381.8 1077.3 393.7 C1074.5 405.6 1070.8 417.4 1067.1 426.8 C1063.4 436.2 1057.7 444.0 1055.3 450.0 C1052.9 456.0 1053.3 457.4 1052.7 462.7 C1052.1 468.0 1050.8 474.4 1051.5 481.8 C1052.2 489.2 1054.9 498.8 1056.6 507.3 C1058.3 515.8 1060.6 525.3 1061.7 532.7 C1062.8 540.1 1065.0 547.8 1063.0 551.8 C1061.0 555.8 1054.5 555.4 1050.0 556.5 C1045.5 557.6 1041.8 567.0 1036.2 558.2 C1030.6 549.4 1020.3 503.6 1016.5 503.5 C1012.7 503.4 1017.0 549.1 1013.4 557.5 C1009.8 565.9 1000.5 555.4 995.0 554.0 C989.5 552.6 982.5 553.9 980.2 549.3 C978.0 544.7 980.5 536.6 981.5 526.4 C982.5 516.2 985.2 500.9 986.5 488.2 C987.8 475.5 988.1 458.1 989.0 450.0 C989.9 441.9 990.4 446.8 992.0 439.5 C993.6 432.2 996.1 417.9 998.4 406.4 C1000.7 394.9 1004.1 381.2 1006.0 370.7 C1007.9 360.2 1007.8 346.9 1009.5 343.5Z" fill="url(#gPants)" />
<g clip-path="url(#cPants)">
<path d="M1010.0 352.0 C1011.7 352.7 1016.0 356.0 1020.0 356.0 C1024.0 356.0 1031.7 352.7 1034.0 352.0" fill="none" stroke="#1e2a34" stroke-width="3" stroke-linecap="round" filter="url(#blur1)" opacity="0.8"/>
<path d="M1024.0 372.0 C1024.5 375.3 1026.3 385.3 1027.0 392.0 C1027.7 398.7 1028.2 404.5 1028.0 412.0 C1027.8 419.5 1026.3 432.8 1026.0 437.0" fill="none" stroke="#6e7c84" stroke-width="3.5" stroke-linecap="round" filter="url(#blur1)" opacity="0.75"/>
<path d="M1026.0 380.0 C1026.2 383.3 1026.8 393.3 1027.0 400.0 C1027.2 406.7 1027.0 416.7 1027.0 420.0" fill="none" stroke="#9aa8ae" stroke-width="1.2" stroke-linecap="round" filter="url(#blur06)" opacity="0.6"/>
<path d="M1023.0 445.0 C1022.8 449.2 1022.5 461.7 1022.0 470.0 C1021.5 478.3 1020.3 490.8 1020.0 495.0" fill="none" stroke="#5a666c" stroke-width="2" stroke-linecap="round" filter="url(#blur1)" opacity="0.5"/>
<path d="M1040.0 345.0 C1048.3 338.2 1079.3 333.2 1086.0 339.0 C1092.7 344.8 1083.0 365.7 1080.0 380.0 C1077.0 394.3 1071.7 412.5 1068.0 425.0 C1064.3 437.5 1061.7 448.8 1058.0 455.0 C1054.3 461.2 1049.0 467.8 1046.0 462.0 C1043.0 456.2 1041.7 433.7 1040.0 420.0 C1038.3 406.3 1036.0 392.5 1036.0 380.0 C1036.0 367.5 1031.7 351.8 1040.0 345.0Z" fill="#5a3222" filter="url(#blur2)" opacity="0.7"/>
<path d="M1063.4 401.9 C1062.3 409.1 1058.1 437.6 1057.0 444.8" fill="none" stroke="#3a2016" stroke-width="1.782438036104962" stroke-linecap="round" filter="url(#blur06)" opacity="0.54"/>
<path d="M1073.0 404.3 C1072.4 408.3 1070.0 424.1 1069.4 428.0" fill="none" stroke="#2e1810" stroke-width="2.0810805901007474" stroke-linecap="round" filter="url(#blur06)" opacity="0.39"/>
<path d="M1056.6 367.3 C1055.8 372.9 1052.4 395.6 1051.5 401.3" fill="none" stroke="#3a2016" stroke-width="1.299196857331224" stroke-linecap="round" filter="url(#blur06)" opacity="0.61"/>
<path d="M1054.0 362.7 C1052.8 370.3 1048.3 400.5 1047.2 408.1" fill="none" stroke="#6e4030" stroke-width="1.1915250548296459" stroke-linecap="round" filter="url(#blur06)" opacity="0.63"/>
<path d="M1042.1 393.2 C1041.6 396.5 1039.7 409.4 1039.2 412.7" fill="none" stroke="#2e1810" stroke-width="2.1668047476238437" stroke-linecap="round" filter="url(#blur06)" opacity="0.35"/>
<path d="M1070.0 417.2 C1069.5 420.7 1067.4 434.5 1066.9 438.0" fill="none" stroke="#2e1810" stroke-width="1.347166201296312" stroke-linecap="round" filter="url(#blur06)" opacity="0.69"/>
<path d="M1059.7 397.4 C1059.2 401.1 1057.0 415.9 1056.4 419.6" fill="none" stroke="#3a2016" stroke-width="1.2362548527112391" stroke-linecap="round" filter="url(#blur06)" opacity="0.69"/>
<path d="M1052.9 351.5 C1052.1 356.4 1049.2 376.1 1048.4 381.0" fill="none" stroke="#2e1810" stroke-width="1.3165743267399643" stroke-linecap="round" filter="url(#blur06)" opacity="0.47"/>
<path d="M1072.0 391.0 C1071.1 397.0 1067.5 420.9 1066.6 426.9" fill="none" stroke="#3a2016" stroke-width="1.4054762339534381" stroke-linecap="round" filter="url(#blur06)" opacity="0.46"/>
<path d="M1072.0 383.7 C1071.4 388.0 1068.8 405.4 1068.1 409.7" fill="none" stroke="#6e4030" stroke-width="1.5670460197746974" stroke-linecap="round" filter="url(#blur06)" opacity="0.41"/>
<path d="M1047.3 415.7 C1046.1 423.8 1041.2 455.9 1040.0 464.0" fill="none" stroke="#6e4030" stroke-width="2.0138570672657554" stroke-linecap="round" filter="url(#blur06)" opacity="0.36"/>
<path d="M1070.7 375.6 C1069.8 381.5 1066.3 405.0 1065.4 410.9" fill="none" stroke="#2e1810" stroke-width="1.5433867041474025" stroke-linecap="round" filter="url(#blur06)" opacity="0.60"/>
<path d="M1063.4 416.8 C1063.0 420.0 1061.0 432.8 1060.6 436.0" fill="none" stroke="#2e1810" stroke-width="2.1155863835170257" stroke-linecap="round" filter="url(#blur06)" opacity="0.68"/>
<path d="M1051.2 374.8 C1050.3 380.4 1047.0 402.6 1046.1 408.2" fill="none" stroke="#6e4030" stroke-width="1.1296634428777996" stroke-linecap="round" filter="url(#blur06)" opacity="0.61"/>
<path d="M1071.1 410.2 C1070.7 412.9 1069.0 423.7 1068.6 426.5" fill="none" stroke="#2e1810" stroke-width="1.2501800716585565" stroke-linecap="round" filter="url(#blur06)" opacity="0.53"/>
<path d="M1052.0 360.4 C1051.3 364.5 1048.9 380.9 1048.3 385.0" fill="none" stroke="#3a2016" stroke-width="1.6541728445178867" stroke-linecap="round" filter="url(#blur06)" opacity="0.46"/>
<path d="M1049.9 362.4 C1049.5 365.4 1047.7 377.2 1047.3 380.2" fill="none" stroke="#2e1810" stroke-width="1.8653620483503455" stroke-linecap="round" filter="url(#blur06)" opacity="0.46"/>
<path d="M1057.3 400.4 C1056.8 403.4 1055.1 415.3 1054.6 418.2" fill="none" stroke="#3a2016" stroke-width="1.6402368896330013" stroke-linecap="round" filter="url(#blur06)" opacity="0.49"/>
<path d="M1046.4 391.6 C1045.3 398.9 1041.0 428.2 1039.9 435.5" fill="none" stroke="#6e4030" stroke-width="1.7811597265758272" stroke-linecap="round" filter="url(#blur06)" opacity="0.40"/>
<path d="M1079.1 394.7 C1078.0 401.9 1073.7 430.6 1072.6 437.7" fill="none" stroke="#6e4030" stroke-width="2.0061151374017587" stroke-linecap="round" filter="url(#blur06)" opacity="0.40"/>
<path d="M1068.2 416.5 C1067.3 422.7 1063.6 447.4 1062.6 453.5" fill="none" stroke="#6e4030" stroke-width="1.1279567316367107" stroke-linecap="round" filter="url(#blur06)" opacity="0.50"/>
<path d="M1042.6 409.1 C1041.9 413.4 1039.4 430.2 1038.8 434.4" fill="none" stroke="#6e4030" stroke-width="2.1064040124353762" stroke-linecap="round" filter="url(#blur06)" opacity="0.57"/>
<path d="M1043.4 386.6 C1042.2 394.7 1037.4 427.1 1036.2 435.2" fill="none" stroke="#3a2016" stroke-width="1.875406023720225" stroke-linecap="round" filter="url(#blur06)" opacity="0.52"/>
<path d="M1048.8 378.3 C1048.3 381.6 1046.3 395.0 1045.8 398.4" fill="none" stroke="#6e4030" stroke-width="1.9864660053407048" stroke-linecap="round" filter="url(#blur06)" opacity="0.54"/>
<path d="M1043.9 415.6 C1042.8 423.2 1038.2 453.4 1037.1 461.0" fill="none" stroke="#2e1810" stroke-width="1.106964899526793" stroke-linecap="round" filter="url(#blur06)" opacity="0.45"/>
<path d="M1070.4 410.7 C1069.7 415.3 1067.0 433.8 1066.3 438.4" fill="none" stroke="#6e4030" stroke-width="1.8335160993410735" stroke-linecap="round" filter="url(#blur06)" opacity="0.58"/>
<ellipse cx="1037" cy="467" rx="4" ry="1.8" fill="#b8987e" filter="url(#blur1)"/>
<path d="M982.0 500.0 C982.3 503.3 984.0 512.5 984.0 520.0 C984.0 527.5 982.3 540.8 982.0 545.0" fill="none" stroke="#6a7a82" stroke-width="2.5" stroke-linecap="round" filter="url(#blur1)" opacity="0.7"/>
<path d="M994.0 465.0 C993.8 468.3 993.2 481.7 993.0 485.0" fill="none" stroke="#5a6a70" stroke-width="1.5" stroke-linecap="round" filter="url(#blur06)" opacity="0.5"/>
<path d="M1030.0 480.0 C1031.0 485.0 1033.7 500.0 1036.0 510.0 C1038.3 520.0 1042.7 535.0 1044.0 540.0" fill="none" stroke="#4a2c20" stroke-width="4" stroke-linecap="round" filter="url(#blur2)" opacity="0.8"/>
<path d="M1048.0 490.0 C1049.0 495.0 1052.3 510.8 1054.0 520.0 C1055.7 529.2 1057.3 540.8 1058.0 545.0" fill="none" stroke="#3a2218" stroke-width="3" stroke-linecap="round" filter="url(#blur1)" opacity="0.7"/>
<path d="M1040.0 520.0 C1040.7 525.0 1043.3 545.0 1044.0 550.0" fill="none" stroke="#6a4434" stroke-width="2" stroke-linecap="round" filter="url(#blur1)" opacity="0.6"/>
<path d="M1006.0 470.0 C1005.8 475.0 1005.2 495.0 1005.0 500.0" fill="none" stroke="#5a3a2a" stroke-width="1.5" stroke-linecap="round" filter="url(#blur06)" opacity="0.6"/>
</g>
<defs><clipPath id="cPants"><path d="M1009.5 343.5 C1011.2 340.1 1013.0 349.5 1016.2 350.0 C1019.5 350.5 1024.0 348.2 1029.0 346.5 C1034.0 344.8 1036.5 340.8 1046.0 339.5 C1055.5 338.2 1079.7 336.3 1086.0 339.0 C1092.3 341.7 1085.2 346.4 1083.7 355.5 C1082.2 364.6 1080.1 381.8 1077.3 393.7 C1074.5 405.6 1070.8 417.4 1067.1 426.8 C1063.4 436.2 1057.7 444.0 1055.3 450.0 C1052.9 456.0 1053.3 457.4 1052.7 462.7 C1052.1 468.0 1050.8 474.4 1051.5 481.8 C1052.2 489.2 1054.9 498.8 1056.6 507.3 C1058.3 515.8 1060.6 525.3 1061.7 532.7 C1062.8 540.1 1065.0 547.8 1063.0 551.8 C1061.0 555.8 1054.5 555.4 1050.0 556.5 C1045.5 557.6 1041.8 567.0 1036.2 558.2 C1030.6 549.4 1020.3 503.6 1016.5 503.5 C1012.7 503.4 1017.0 549.1 1013.4 557.5 C1009.8 565.9 1000.5 555.4 995.0 554.0 C989.5 552.6 982.5 553.9 980.2 549.3 C978.0 544.7 980.5 536.6 981.5 526.4 C982.5 516.2 985.2 500.9 986.5 488.2 C987.8 475.5 988.1 458.1 989.0 450.0 C989.9 441.9 990.4 446.8 992.0 439.5 C993.6 432.2 996.1 417.9 998.4 406.4 C1000.7 394.9 1004.1 381.2 1006.0 370.7 C1007.9 360.2 1007.8 346.9 1009.5 343.5Z"/></clipPath></defs>
<path d="M982.7 552.0 C987.4 544.3 1008.9 546.0 1013.3 554.0 C1017.7 562.0 1009.9 584.0 1009.0 600.0 C1008.1 616.0 1008.6 633.3 1008.2 650.0 C1007.8 666.7 1007.2 687.4 1006.6 700.0 C1006.0 712.6 1004.9 716.9 1004.6 725.5 C1004.3 734.1 1004.0 746.9 1004.6 751.5 C1005.2 756.1 1007.4 752.2 1008.3 753.4 C1009.2 754.6 1010.5 754.9 1010.2 758.9 C1009.9 762.9 1009.0 772.9 1006.5 777.5 C1004.0 782.1 1002.1 783.0 995.3 786.7 C988.5 790.4 975.6 795.4 965.7 799.7 C955.8 804.0 942.8 811.2 936.0 812.7 C929.2 814.2 927.0 811.2 924.8 809.0 C922.6 806.8 921.8 803.7 923.0 799.7 C924.2 795.7 927.7 789.2 932.3 784.9 C936.9 780.6 943.4 778.8 950.8 773.8 C958.2 768.8 970.6 760.8 976.8 755.2 C983.0 749.6 985.9 748.4 987.9 740.4 C989.9 732.4 988.8 722.1 988.5 707.0 C988.2 691.9 986.6 667.8 986.0 650.0 C985.4 632.2 985.5 616.3 985.0 600.0 C984.5 583.7 978.0 559.7 982.7 552.0Z" fill="url(#gLegL)" />
<path d="M1036.2 556.0 C1040.2 553.8 1057.4 551.6 1061.7 552.0 C1066.0 552.4 1060.2 545.1 1062.1 558.6 C1064.0 572.1 1068.3 609.9 1073.3 632.8 C1078.2 655.7 1086.5 676.6 1091.8 695.8 C1097.0 715.0 1102.0 733.8 1104.8 747.8 C1107.5 761.8 1106.9 771.7 1108.3 779.7 C1109.7 787.7 1111.7 792.6 1113.0 796.0 C1114.3 799.4 1115.6 796.0 1115.9 800.0 C1116.2 804.0 1118.0 812.0 1115.0 820.0 C1112.0 828.0 1103.8 841.3 1098.0 848.0 C1092.2 854.7 1085.3 859.7 1080.0 860.0 C1074.7 860.3 1067.7 854.5 1066.0 850.0 C1064.3 845.5 1067.1 840.5 1069.7 833.2 C1072.3 825.9 1078.9 815.3 1081.6 806.4 C1084.3 797.5 1085.5 793.2 1086.0 779.7 C1086.5 766.2 1087.1 743.8 1084.4 725.5 C1081.7 707.2 1075.2 688.4 1069.6 669.9 C1064.0 651.4 1056.3 631.7 1051.0 614.2 C1045.7 596.7 1040.0 574.7 1037.5 565.0 C1035.0 555.3 1032.2 558.2 1036.2 556.0Z" fill="url(#gLegR)" />
<g filter="url(#blur1)">
<path d="M988.0 705.0 C990.0 697.0 997.0 695.8 1000.0 700.0 C1003.0 704.2 1005.0 720.7 1006.0 730.0 C1007.0 739.3 1007.7 749.0 1006.0 756.0 C1004.3 763.0 1000.3 769.3 996.0 772.0 C991.7 774.7 981.3 776.0 980.0 772.0 C978.7 768.0 986.7 759.2 988.0 748.0 C989.3 736.8 986.0 713.0 988.0 705.0Z" fill="#7a3020" opacity="0.55"/>
<path d="M975.0 752.0 C978.0 748.3 986.2 744.3 990.0 746.0 C993.8 747.7 998.3 757.7 998.0 762.0 C997.7 766.3 992.3 771.0 988.0 772.0 C983.7 773.0 974.2 771.3 972.0 768.0 C969.8 764.7 972.0 755.7 975.0 752.0Z" fill="#b8401a" opacity="0.75"/>
<path d="M1091.0 768.0 C1092.8 762.0 1101.0 760.0 1104.0 764.0 C1107.0 768.0 1109.3 784.5 1109.0 792.0 C1108.7 799.5 1104.7 807.7 1102.0 809.0 C1099.3 810.3 1094.8 806.8 1093.0 800.0 C1091.2 793.2 1089.2 774.0 1091.0 768.0Z" fill="#b2401c" opacity="0.7"/>
<path d="M995.0 570.0 C995.3 575.0 996.5 591.3 997.0 600.0 C997.5 608.7 997.8 618.3 998.0 622.0" fill="none" stroke="#6a2e1e" stroke-width="4" stroke-linecap="round" opacity="0.6"/>
<ellipse cx="1064.3" cy="615.0" rx="0.9" ry="0.9" fill="#4a1e12" opacity="0.75"/>
<ellipse cx="1064.2" cy="614.1" rx="0.9" ry="0.9" fill="#4a1e12" opacity="0.75"/>
<ellipse cx="1061.1" cy="604.2" rx="0.9" ry="0.9" fill="#4a1e12" opacity="0.75"/>
<ellipse cx="1065.3" cy="624.8" rx="0.9" ry="0.9" fill="#4a1e12" opacity="0.75"/>
<ellipse cx="1061.9" cy="601.0" rx="0.9" ry="0.9" fill="#4a1e12" opacity="0.75"/>
<ellipse cx="1062.4" cy="600.4" rx="0.9" ry="0.9" fill="#4a1e12" opacity="0.75"/>
<ellipse cx="1066.9" cy="619.2" rx="0.9" ry="0.9" fill="#4a1e12" opacity="0.75"/>
<ellipse cx="1059.3" cy="595.8" rx="0.9" ry="0.9" fill="#4a1e12" opacity="0.75"/>
<ellipse cx="1059.5" cy="602.0" rx="0.9" ry="0.9" fill="#4a1e12" opacity="0.75"/>
<ellipse cx="1063.7" cy="615.1" rx="0.9" ry="0.9" fill="#4a1e12" opacity="0.75"/>
<ellipse cx="1065.6" cy="615.7" rx="0.9" ry="0.9" fill="#4a1e12" opacity="0.75"/>
<ellipse cx="1066.0" cy="620.0" rx="0.9" ry="0.9" fill="#4a1e12" opacity="0.75"/>
<ellipse cx="1072.9" cy="634.3" rx="0.9" ry="0.9" fill="#4a1e12" opacity="0.75"/>
<ellipse cx="1065.7" cy="621.4" rx="0.9" ry="0.9" fill="#4a1e12" opacity="0.75"/>
<ellipse cx="1059.6" cy="608.5" rx="0.9" ry="0.9" fill="#4a1e12" opacity="0.75"/>
<ellipse cx="1065.5" cy="611.0" rx="0.9" ry="0.9" fill="#4a1e12" opacity="0.75"/>
<ellipse cx="1071.6" cy="629.5" rx="0.9" ry="0.9" fill="#4a1e12" opacity="0.75"/>
<ellipse cx="1063.8" cy="604.4" rx="0.9" ry="0.9" fill="#4a1e12" opacity="0.75"/>
<ellipse cx="1069.2" cy="630.6" rx="0.9" ry="0.9" fill="#4a1e12" opacity="0.75"/>
<ellipse cx="1067.6" cy="618.7" rx="0.9" ry="0.9" fill="#4a1e12" opacity="0.75"/>
<ellipse cx="1059.0" cy="602.0" rx="0.9" ry="0.9" fill="#4a1e12" opacity="0.75"/>
<ellipse cx="1065.0" cy="623.3" rx="0.9" ry="0.9" fill="#4a1e12" opacity="0.75"/>
<ellipse cx="1057.5" cy="601.8" rx="0.9" ry="0.9" fill="#4a1e12" opacity="0.75"/>
<ellipse cx="1061.3" cy="603.2" rx="0.9" ry="0.9" fill="#4a1e12" opacity="0.75"/>
<ellipse cx="1062.5" cy="602.4" rx="0.9" ry="0.9" fill="#4a1e12" opacity="0.75"/>
<ellipse cx="1063.8" cy="619.9" rx="0.9" ry="0.9" fill="#4a1e12" opacity="0.75"/>
<ellipse cx="1060.0" cy="606.5" rx="0.9" ry="0.9" fill="#4a1e12" opacity="0.75"/>
<ellipse cx="1066.7" cy="627.5" rx="0.9" ry="0.9" fill="#4a1e12" opacity="0.75"/>
<ellipse cx="1060.7" cy="606.0" rx="0.9" ry="0.9" fill="#4a1e12" opacity="0.75"/>
<ellipse cx="1063.7" cy="622.1" rx="0.9" ry="0.9" fill="#4a1e12" opacity="0.75"/>
<ellipse cx="1059.9" cy="605.8" rx="0.9" ry="0.9" fill="#4a1e12" opacity="0.75"/>
<ellipse cx="1061.4" cy="607.1" rx="0.9" ry="0.9" fill="#4a1e12" opacity="0.75"/>
<ellipse cx="1060.5" cy="599.2" rx="0.9" ry="0.9" fill="#4a1e12" opacity="0.75"/>
<ellipse cx="1064.8" cy="618.5" rx="0.9" ry="0.9" fill="#4a1e12" opacity="0.75"/>
<ellipse cx="1069.5" cy="631.8" rx="0.9" ry="0.9" fill="#4a1e12" opacity="0.75"/>
<ellipse cx="1066.6" cy="626.8" rx="0.9" ry="0.9" fill="#4a1e12" opacity="0.75"/>
<ellipse cx="1070.9" cy="628.7" rx="0.9" ry="0.9" fill="#4a1e12" opacity="0.75"/>
<ellipse cx="1062.5" cy="605.6" rx="0.9" ry="0.9" fill="#4a1e12" opacity="0.75"/>
<ellipse cx="1063.9" cy="605.6" rx="0.9" ry="0.9" fill="#4a1e12" opacity="0.75"/>
<ellipse cx="1065.2" cy="617.1" rx="0.9" ry="0.9" fill="#4a1e12" opacity="0.75"/>
<ellipse cx="1062.2" cy="597.3" rx="0.9" ry="0.9" fill="#4a1e12" opacity="0.75"/>
<ellipse cx="1065.3" cy="623.7" rx="0.9" ry="0.9" fill="#4a1e12" opacity="0.75"/>
<ellipse cx="1064.3" cy="617.2" rx="0.9" ry="0.9" fill="#4a1e12" opacity="0.75"/>
<ellipse cx="1064.3" cy="621.8" rx="0.9" ry="0.9" fill="#4a1e12" opacity="0.75"/>
<ellipse cx="1067.3" cy="617.6" rx="0.9" ry="0.9" fill="#4a1e12" opacity="0.75"/>
<ellipse cx="1064.6" cy="605.9" rx="0.9" ry="0.9" fill="#4a1e12" opacity="0.75"/>
<ellipse cx="1057.8" cy="597.4" rx="0.9" ry="0.9" fill="#4a1e12" opacity="0.75"/>
<ellipse cx="1057.7" cy="598.7" rx="0.9" ry="0.9" fill="#4a1e12" opacity="0.75"/>
<ellipse cx="1063.1" cy="617.0" rx="0.9" ry="0.9" fill="#4a1e12" opacity="0.75"/>
<ellipse cx="1071.7" cy="629.7" rx="0.9" ry="0.9" fill="#4a1e12" opacity="0.75"/>
<ellipse cx="1067.1" cy="620.4" rx="0.9" ry="0.9" fill="#4a1e12" opacity="0.75"/>
<ellipse cx="1056.5" cy="599.9" rx="0.9" ry="0.9" fill="#4a1e12" opacity="0.75"/>
<ellipse cx="1069.5" cy="620.3" rx="0.9" ry="0.9" fill="#4a1e12" opacity="0.75"/>
<ellipse cx="1065.9" cy="620.8" rx="0.9" ry="0.9" fill="#4a1e12" opacity="0.75"/>
<ellipse cx="1065.5" cy="606.8" rx="0.9" ry="0.9" fill="#4a1e12" opacity="0.75"/>
<ellipse cx="1066.4" cy="618.3" rx="0.9" ry="0.9" fill="#4a1e12" opacity="0.75"/>
<ellipse cx="1068.3" cy="624.7" rx="0.9" ry="0.9" fill="#4a1e12" opacity="0.75"/>
<ellipse cx="1068.2" cy="630.7" rx="0.9" ry="0.9" fill="#4a1e12" opacity="0.75"/>
<ellipse cx="1071.1" cy="629.1" rx="0.9" ry="0.9" fill="#4a1e12" opacity="0.75"/>
<ellipse cx="1069.9" cy="625.8" rx="0.9" ry="0.9" fill="#4a1e12" opacity="0.75"/>
<path d="M1055.0 558.0 C1055.7 560.3 1058.3 569.7 1059.0 572.0" fill="none" stroke="#b8461e" stroke-width="3" stroke-linecap="round" opacity="0.6"/>
</g>
<path d="M921.9 803.1 C922.1 799.6 923.7 793.0 926.0 789.3 C928.3 785.6 931.8 783.1 935.7 781.0 C939.6 778.9 945.4 777.4 949.5 776.9 C953.6 776.4 956.6 779.0 960.5 778.3 C964.4 777.6 967.6 775.6 972.9 772.8 C978.2 770.0 986.9 764.5 992.2 761.7 C997.5 758.9 1001.7 756.9 1004.7 756.2 C1007.7 755.5 1009.3 755.8 1010.2 757.6 C1011.1 759.4 1010.4 763.8 1010.2 767.2 C1010.0 770.7 1009.9 775.5 1008.8 778.3 C1007.6 781.1 1007.4 781.5 1003.3 783.8 C999.2 786.1 990.0 789.6 984.0 792.1 C978.0 794.6 973.1 796.2 967.4 799.0 C961.6 801.8 954.8 806.3 949.5 808.6 C944.2 810.9 939.8 812.6 935.7 812.8 C931.6 813.0 927.0 811.6 924.7 810.0 C922.4 808.4 921.7 806.6 921.9 803.1Z" fill="#110c18" />
<path d="M964.5 787.0 C966.7 784.2 977.8 779.8 981.0 780.5 C984.2 781.2 985.7 788.7 983.5 791.5 C981.3 794.3 971.2 798.2 968.0 797.5 C964.8 796.8 962.3 789.8 964.5 787.0Z" fill="#a08068" filter="url(#blur06)" opacity="0.9"/>
<path d="M998.0 773.0 C999.1 770.5 1006.7 767.0 1008.5 768.0 C1010.3 769.0 1010.1 776.5 1009.0 779.0 C1007.9 781.5 1003.8 784.0 1002.0 783.0 C1000.2 782.0 996.9 775.5 998.0 773.0Z" fill="#7a5a4a" filter="url(#blur06)" opacity="0.8"/>
<path d="M923.0 802.0 C924.5 801.2 931.8 803.3 934.0 805.0 C936.2 806.7 937.5 811.2 936.0 812.0 C934.5 812.8 927.2 811.7 925.0 810.0 C922.8 808.3 921.5 802.8 923.0 802.0Z" fill="#9a7a62" filter="url(#blur06)" opacity="0.9"/>
<path d="M1069.7 833.2 C1066.7 833.2 1063.5 838.2 1060.8 842.1 C1058.1 846.0 1054.8 852.5 1053.4 856.9 C1052.0 861.3 1052.1 865.3 1052.6 868.8 C1053.1 872.3 1054.2 875.4 1056.3 877.7 C1058.4 880.0 1061.9 881.8 1065.2 882.4 C1068.5 883.0 1072.2 883.1 1076.0 881.5 C1079.8 879.9 1084.8 875.6 1088.0 873.0 C1091.2 870.4 1093.3 869.0 1095.5 866.0 C1097.7 863.0 1098.2 859.3 1101.0 855.0 C1103.8 850.7 1109.3 844.7 1112.3 840.0 C1115.2 835.3 1117.1 830.9 1118.7 827.0 C1120.3 823.1 1121.5 819.7 1121.7 816.8 C1122.0 813.9 1121.2 813.1 1120.2 809.4 C1119.2 805.7 1116.9 797.3 1115.7 794.6 C1114.5 791.9 1113.8 790.0 1112.8 793.0 C1111.8 796.0 1111.5 806.7 1109.8 812.4 C1108.1 818.1 1105.6 822.2 1102.4 827.2 C1099.2 832.2 1094.5 839.6 1090.5 842.1 C1086.5 844.6 1082.1 843.6 1078.6 842.1 C1075.1 840.6 1072.7 833.2 1069.7 833.2Z" fill="#110c18" />
<path d="M1110.5 829.0 C1112.9 825.8 1114.5 828.5 1113.0 832.5 C1111.5 836.5 1103.9 849.8 1101.5 853.0 C1099.1 856.2 1097.0 855.5 1098.5 851.5 C1100.0 847.5 1108.1 832.2 1110.5 829.0Z" fill="#b09078" filter="url(#blur06)" opacity="0.9"/>
<path d="M1118.5 808.0 C1119.0 807.2 1121.1 808.7 1121.5 810.0 C1121.9 811.3 1121.5 815.2 1121.0 816.0 C1120.5 816.8 1118.9 816.3 1118.5 815.0 C1118.1 813.7 1118.0 808.8 1118.5 808.0Z" fill="#8a6a58" filter="url(#blur06)" opacity="0.8"/>
<path d="M1054.9 869.0 C1055.9 868.0 1061.3 870.0 1063.0 872.0 C1064.7 874.0 1066.2 879.7 1065.2 880.7 C1064.2 881.7 1058.7 880.0 1057.0 878.0 C1055.3 876.0 1053.9 870.0 1054.9 869.0Z" fill="#a08068" filter="url(#blur06)" opacity="0.9"/>
<path d="M975.3 114.4 C975.7 113.5 976.1 113.0 977.8 112.5 C979.5 112.0 982.1 111.4 985.5 111.2 C988.9 111.0 994.0 111.4 998.2 111.2 C1002.4 111.0 1007.1 110.7 1010.9 109.9 C1014.7 109.2 1018.8 108.5 1021.1 106.7 C1023.4 104.9 1023.2 101.8 1024.9 99.1 C1026.6 96.4 1029.0 92.8 1031.3 90.8 C1033.6 88.8 1035.9 87.6 1038.9 87.0 C1041.9 86.4 1045.7 86.5 1049.1 87.4 C1052.5 88.4 1056.3 90.3 1059.3 92.7 C1062.3 95.1 1065.3 98.2 1066.9 101.6 C1068.5 105.0 1068.6 109.1 1068.8 113.1 C1069.0 117.1 1068.6 122.4 1068.2 125.8 C1067.8 129.2 1065.9 129.7 1066.3 133.5 C1066.7 137.3 1068.9 144.7 1070.7 148.7 C1072.5 152.7 1074.8 155.0 1077.1 157.6 C1079.4 160.2 1082.8 162.1 1084.7 164.0 C1086.6 165.9 1088.1 167.7 1088.5 169.1 C1088.9 170.5 1088.6 171.4 1087.3 172.3 C1086.0 173.2 1083.5 174.5 1080.9 174.8 C1078.4 175.1 1075.2 174.8 1072.0 174.2 C1068.8 173.6 1064.8 172.7 1061.8 171.0 C1058.8 169.3 1056.3 166.7 1054.2 164.0 C1052.1 161.3 1050.6 158.5 1049.1 155.1 C1047.6 151.7 1046.6 146.8 1045.3 143.6 C1044.0 140.4 1044.0 137.6 1041.5 136.0 C1039.0 134.4 1034.2 134.1 1030.0 134.0 C1025.8 133.9 1019.5 134.8 1016.0 135.5 C1012.5 136.2 1010.5 136.8 1009.0 138.5 C1007.5 140.2 1007.2 143.1 1007.0 146.0 C1006.8 148.9 1009.5 154.7 1008.0 156.0 C1006.5 157.3 1001.3 154.8 998.2 153.8 C995.1 152.8 992.3 152.1 989.3 150.0 C986.3 147.9 982.5 144.3 980.4 141.1 C978.3 137.9 977.4 134.7 976.5 130.9 C975.6 127.1 975.5 121.0 975.3 118.2 C975.1 115.5 974.9 115.4 975.3 114.4Z" fill="#2a1b15" />
<path d="M975.3 114.4 C975.6 113.6 976.1 113.0 977.8 112.5 C979.5 112.0 982.1 111.4 985.5 111.2 C988.9 111.0 994.0 111.4 998.2 111.2 C1002.4 111.0 1007.1 110.7 1010.9 109.9 C1014.7 109.2 1018.8 108.5 1021.1 106.7 C1023.4 104.9 1023.2 101.8 1024.9 99.1 C1026.6 96.4 1029.0 92.8 1031.3 90.8 C1033.6 88.8 1035.9 87.6 1038.9 87.0 C1041.9 86.4 1045.7 86.5 1049.1 87.4 C1052.5 88.4 1056.3 90.3 1059.3 92.7 C1062.3 95.1 1065.3 98.2 1066.9 101.6 C1068.5 105.0 1068.6 109.1 1068.8 113.1 C1069.0 117.1 1068.6 122.4 1068.2 125.8 C1067.8 129.2 1065.9 129.7 1066.3 133.5 C1066.7 137.3 1068.9 144.7 1070.7 148.7 C1072.5 152.7 1074.8 155.0 1077.1 157.6 C1079.4 160.2 1082.8 162.1 1084.7 164.0 C1086.6 165.9 1088.1 168.0 1088.5 169.1 C1088.9 170.2 1090.7 171.2 1087.3 170.4 C1083.9 169.6 1073.3 166.3 1068.2 164.0 C1063.1 161.7 1059.9 159.4 1056.7 156.4 C1053.5 153.4 1051.4 149.6 1049.1 146.2 C1046.8 142.8 1045.9 138.6 1042.7 136.0 C1039.5 133.4 1035.3 132.6 1030.0 130.9 C1024.7 129.2 1017.3 127.9 1010.9 125.8 C1004.5 123.7 997.6 119.9 991.8 118.5 C986.0 117.1 978.8 118.2 976.0 117.5 C973.2 116.8 975.0 115.2 975.3 114.4Z" fill="#7b5438" />
<g filter="url(#blur1)">
<path d="M1028.0 96.0 C1029.7 93.5 1035.5 89.7 1040.0 89.0 C1044.5 88.3 1051.0 89.5 1055.0 92.0 C1059.0 94.5 1063.2 100.2 1064.0 104.0 C1064.8 107.8 1063.2 114.0 1060.0 115.0 C1056.8 116.0 1050.0 111.8 1045.0 110.0 C1040.0 108.2 1032.8 106.3 1030.0 104.0 C1027.2 101.7 1026.3 98.5 1028.0 96.0Z" fill="#8c6446" opacity="0.8"/>
<path d="M1018.0 108.0 C1020.0 108.2 1026.0 108.8 1030.0 109.5 C1034.0 110.2 1037.7 110.2 1042.0 112.0 C1046.3 113.8 1051.8 116.7 1056.0 120.0 C1060.2 123.3 1065.2 130.0 1067.0 132.0" fill="none" stroke="#3a2418" stroke-width="2" stroke-linecap="round" opacity="0.85"/>
<path d="M1036.0 89.0 C1039.2 90.2 1050.0 92.8 1055.0 96.0 C1060.0 99.2 1064.2 106.0 1066.0 108.0" fill="none" stroke="#5a3a28" stroke-width="1.2" stroke-linecap="round" opacity="0.6"/>
<path d="M990.0 116.0 C995.0 117.0 1010.8 119.0 1020.0 122.0 C1029.2 125.0 1040.8 132.0 1045.0 134.0" fill="none" stroke="#a07050" stroke-width="2" stroke-linecap="round" opacity="0.5"/>
</g>
</svg>
<svg class="abs" id="rtop" width="1557" height="17" viewBox="0 0 1557 17">
<rect x="0" y="0" width="1557" height="17" fill="#2a2a2a"/>
<line x1="20.5" y1="12" x2="20.5" y2="16" class="mn"/>
<line x1="26.5" y1="12" x2="26.5" y2="16" class="mn"/>
<line x1="32.5" y1="12" x2="32.5" y2="16" class="mn"/>
<line x1="38.5" y1="0" x2="38.5" y2="16" class="mj"/>
<text x="40" y="14">600</text>
<line x1="44.5" y1="12" x2="44.5" y2="16" class="mn"/>
<line x1="50.5" y1="12" x2="50.5" y2="16" class="mn"/>
<line x1="56.5" y1="12" x2="56.5" y2="16" class="mn"/>
<line x1="61.5" y1="12" x2="61.5" y2="16" class="mn"/>
<line x1="67.5" y1="10" x2="67.5" y2="16" class="mn"/>
<line x1="73.5" y1="12" x2="73.5" y2="16" class="mn"/>
<line x1="79.5" y1="12" x2="79.5" y2="16" class="mn"/>
<line x1="85.5" y1="12" x2="85.5" y2="16" class="mn"/>
<line x1="91.5" y1="12" x2="91.5" y2="16" class="mn"/>
<line x1="97.5" y1="0" x2="97.5" y2="16" class="mj"/>
<text x="99" y="14">400</text>
<line x1="103.5" y1="12" x2="103.5" y2="16" class="mn"/>
<line x1="108.5" y1="12" x2="108.5" y2="16" class="mn"/>
<line x1="114.5" y1="12" x2="114.5" y2="16" class="mn"/>
<line x1="120.5" y1="12" x2="120.5" y2="16" class="mn"/>
<line x1="126.5" y1="10" x2="126.5" y2="16" class="mn"/>
<line x1="132.5" y1="12" x2="132.5" y2="16" class="mn"/>
<line x1="138.5" y1="12" x2="138.5" y2="16" class="mn"/>
<line x1="144.5" y1="12" x2="144.5" y2="16" class="mn"/>
<line x1="149.5" y1="12" x2="149.5" y2="16" class="mn"/>
<line x1="155.5" y1="0" x2="155.5" y2="16" class="mj"/>
<text x="157" y="14">200</text>
<line x1="161.5" y1="12" x2="161.5" y2="16" class="mn"/>
<line x1="167.5" y1="12" x2="167.5" y2="16" class="mn"/>
<line x1="173.5" y1="12" x2="173.5" y2="16" class="mn"/>
<line x1="179.5" y1="12" x2="179.5" y2="16" class="mn"/>
<line x1="185.5" y1="10" x2="185.5" y2="16" class="mn"/>
<line x1="191.5" y1="12" x2="191.5" y2="16" class="mn"/>
<line x1="196.5" y1="12" x2="196.5" y2="16" class="mn"/>
<line x1="202.5" y1="12" x2="202.5" y2="16" class="mn"/>
<line x1="208.5" y1="12" x2="208.5" y2="16" class="mn"/>
<line x1="214.5" y1="0" x2="214.5" y2="16" class="mj"/>
<text x="216" y="14">0</text>
<line x1="220.5" y1="12" x2="220.5" y2="16" class="mn"/>
<line x1="226.5" y1="12" x2="226.5" y2="16" class="mn"/>
<line x1="232.5" y1="12" x2="232.5" y2="16" class="mn"/>
<line x1="237.5" y1="12" x2="237.5" y2="16" class="mn"/>
<line x1="243.5" y1="10" x2="243.5" y2="16" class="mn"/>
<line x1="249.5" y1="12" x2="249.5" y2="16" class="mn"/>
<line x1="255.5" y1="12" x2="255.5" y2="16" class="mn"/>
<line x1="261.5" y1="12" x2="261.5" y2="16" class="mn"/>
<line x1="267.5" y1="12" x2="267.5" y2="16" class="mn"/>
<line x1="273.5" y1="0" x2="273.5" y2="16" class="mj"/>
<text x="275" y="14">200</text>
<line x1="279.5" y1="12" x2="279.5" y2="16" class="mn"/>
<line x1="284.5" y1="12" x2="284.5" y2="16" class="mn"/>
<line x1="290.5" y1="12" x2="290.5" y2="16" class="mn"/>
<line x1="296.5" y1="12" x2="296.5" y2="16" class="mn"/>
<line x1="302.5" y1="10" x2="302.5" y2="16" class="mn"/>
<line x1="308.5" y1="12" x2="308.5" y2="16" class="mn"/>
<line x1="314.5" y1="12" x2="314.5" y2="16" class="mn"/>
<line x1="320.5" y1="12" x2="320.5" y2="16" class="mn"/>
<line x1="325.5" y1="12" x2="325.5" y2="16" class="mn"/>
<line x1="331.5" y1="0" x2="331.5" y2="16" class="mj"/>
<text x="333" y="14">400</text>
<line x1="337.5" y1="12" x2="337.5" y2="16" class="mn"/>
<line x1="343.5" y1="12" x2="343.5" y2="16" class="mn"/>
<line x1="349.5" y1="12" x2="349.5" y2="16" class="mn"/>
<line x1="355.5" y1="12" x2="355.5" y2="16" class="mn"/>
<line x1="361.5" y1="10" x2="361.5" y2="16" class="mn"/>
<line x1="367.5" y1="12" x2="367.5" y2="16" class="mn"/>
<line x1="372.5" y1="12" x2="372.5" y2="16" class="mn"/>
<line x1="378.5" y1="12" x2="378.5" y2="16" class="mn"/>
<line x1="384.5" y1="12" x2="384.5" y2="16" class="mn"/>
<line x1="390.5" y1="0" x2="390.5" y2="16" class="mj"/>
<text x="392" y="14">600</text>
<line x1="396.5" y1="12" x2="396.5" y2="16" class="mn"/>
<line x1="402.5" y1="12" x2="402.5" y2="16" class="mn"/>
<line x1="408.5" y1="12" x2="408.5" y2="16" class="mn"/>
<line x1="414.5" y1="12" x2="414.5" y2="16" class="mn"/>
<line x1="419.5" y1="10" x2="419.5" y2="16" class="mn"/>
<line x1="425.5" y1="12" x2="425.5" y2="16" class="mn"/>
<line x1="431.5" y1="12" x2="431.5" y2="16" class="mn"/>
<line x1="437.5" y1="12" x2="437.5" y2="16" class="mn"/>
<line x1="443.5" y1="12" x2="443.5" y2="16" class="mn"/>
<line x1="449.5" y1="0" x2="449.5" y2="16" class="mj"/>
<text x="451" y="14">800</text>
<line x1="455.5" y1="12" x2="455.5" y2="16" class="mn"/>
<line x1="460.5" y1="12" x2="460.5" y2="16" class="mn"/>
<line x1="466.5" y1="12" x2="466.5" y2="16" class="mn"/>
<line x1="472.5" y1="12" x2="472.5" y2="16" class="mn"/>
<line x1="478.5" y1="10" x2="478.5" y2="16" class="mn"/>
<line x1="484.5" y1="12" x2="484.5" y2="16" class="mn"/>
<line x1="490.5" y1="12" x2="490.5" y2="16" class="mn"/>
<line x1="496.5" y1="12" x2="496.5" y2="16" class="mn"/>
<line x1="502.5" y1="12" x2="502.5" y2="16" class="mn"/>
<line x1="507.5" y1="0" x2="507.5" y2="16" class="mj"/>
<text x="509" y="14">1000</text>
<line x1="513.5" y1="12" x2="513.5" y2="16" class="mn"/>
<line x1="519.5" y1="12" x2="519.5" y2="16" class="mn"/>
<line x1="525.5" y1="12" x2="525.5" y2="16" class="mn"/>
<line x1="531.5" y1="12" x2="531.5" y2="16" class="mn"/>
<line x1="537.5" y1="10" x2="537.5" y2="16" class="mn"/>
<line x1="543.5" y1="12" x2="543.5" y2="16" class="mn"/>
<line x1="548.5" y1="12" x2="548.5" y2="16" class="mn"/>
<line x1="554.5" y1="12" x2="554.5" y2="16" class="mn"/>
<line x1="560.5" y1="12" x2="560.5" y2="16" class="mn"/>
<line x1="566.5" y1="0" x2="566.5" y2="16" class="mj"/>
<text x="568" y="14">1200</text>
<line x1="572.5" y1="12" x2="572.5" y2="16" class="mn"/>
<line x1="578.5" y1="12" x2="578.5" y2="16" class="mn"/>
<line x1="584.5" y1="12" x2="584.5" y2="16" class="mn"/>
<line x1="590.5" y1="12" x2="590.5" y2="16" class="mn"/>
<line x1="595.5" y1="10" x2="595.5" y2="16" class="mn"/>
<line x1="601.5" y1="12" x2="601.5" y2="16" class="mn"/>
<line x1="607.5" y1="12" x2="607.5" y2="16" class="mn"/>
<line x1="613.5" y1="12" x2="613.5" y2="16" class="mn"/>
<line x1="619.5" y1="12" x2="619.5" y2="16" class="mn"/>
<line x1="625.5" y1="0" x2="625.5" y2="16" class="mj"/>
<text x="627" y="14">1400</text>
<line x1="631.5" y1="12" x2="631.5" y2="16" class="mn"/>
<line x1="636.5" y1="12" x2="636.5" y2="16" class="mn"/>
<line x1="642.5" y1="12" x2="642.5" y2="16" class="mn"/>
<line x1="648.5" y1="12" x2="648.5" y2="16" class="mn"/>
<line x1="654.5" y1="10" x2="654.5" y2="16" class="mn"/>
<line x1="660.5" y1="12" x2="660.5" y2="16" class="mn"/>
<line x1="666.5" y1="12" x2="666.5" y2="16" class="mn"/>
<line x1="672.5" y1="12" x2="672.5" y2="16" class="mn"/>
<line x1="678.5" y1="12" x2="678.5" y2="16" class="mn"/>
<line x1="683.5" y1="0" x2="683.5" y2="16" class="mj"/>
<text x="685" y="14">1600</text>
<line x1="689.5" y1="12" x2="689.5" y2="16" class="mn"/>
<line x1="695.5" y1="12" x2="695.5" y2="16" class="mn"/>
<line x1="701.5" y1="12" x2="701.5" y2="16" class="mn"/>
<line x1="707.5" y1="12" x2="707.5" y2="16" class="mn"/>
<line x1="713.5" y1="10" x2="713.5" y2="16" class="mn"/>
<line x1="719.5" y1="12" x2="719.5" y2="16" class="mn"/>
<line x1="725.5" y1="12" x2="725.5" y2="16" class="mn"/>
<line x1="730.5" y1="12" x2="730.5" y2="16" class="mn"/>
<line x1="736.5" y1="12" x2="736.5" y2="16" class="mn"/>
<line x1="742.5" y1="0" x2="742.5" y2="16" class="mj"/>
<text x="744" y="14">1800</text>
<line x1="748.5" y1="12" x2="748.5" y2="16" class="mn"/>
<line x1="754.5" y1="12" x2="754.5" y2="16" class="mn"/>
<line x1="760.5" y1="12" x2="760.5" y2="16" class="mn"/>
<line x1="766.5" y1="12" x2="766.5" y2="16" class="mn"/>
<line x1="771.5" y1="10" x2="771.5" y2="16" class="mn"/>
<line x1="777.5" y1="12" x2="777.5" y2="16" class="mn"/>
<line x1="783.5" y1="12" x2="783.5" y2="16" class="mn"/>
<line x1="789.5" y1="12" x2="789.5" y2="16" class="mn"/>
<line x1="795.5" y1="12" x2="795.5" y2="16" class="mn"/>
<line x1="801.5" y1="0" x2="801.5" y2="16" class="mj"/>
<text x="803" y="14">2000</text>
<line x1="807.5" y1="12" x2="807.5" y2="16" class="mn"/>
<line x1="813.5" y1="12" x2="813.5" y2="16" class="mn"/>
<line x1="818.5" y1="12" x2="818.5" y2="16" class="mn"/>
<line x1="824.5" y1="12" x2="824.5" y2="16" class="mn"/>
<line x1="830.5" y1="10" x2="830.5" y2="16" class="mn"/>
<line x1="836.5" y1="12" x2="836.5" y2="16" class="mn"/>
<line x1="842.5" y1="12" x2="842.5" y2="16" class="mn"/>
<line x1="848.5" y1="12" x2="848.5" y2="16" class="mn"/>
<line x1="854.5" y1="12" x2="854.5" y2="16" class="mn"/>
<line x1="859.5" y1="0" x2="859.5" y2="16" class="mj"/>
<text x="861" y="14">2200</text>
<line x1="865.5" y1="12" x2="865.5" y2="16" class="mn"/>
<line x1="871.5" y1="12" x2="871.5" y2="16" class="mn"/>
<line x1="877.5" y1="12" x2="877.5" y2="16" class="mn"/>
<line x1="883.5" y1="12" x2="883.5" y2="16" class="mn"/>
<line x1="889.5" y1="10" x2="889.5" y2="16" class="mn"/>
<line x1="895.5" y1="12" x2="895.5" y2="16" class="mn"/>
<line x1="901.5" y1="12" x2="901.5" y2="16" class="mn"/>
<line x1="906.5" y1="12" x2="906.5" y2="16" class="mn"/>
<line x1="912.5" y1="12" x2="912.5" y2="16" class="mn"/>
<line x1="918.5" y1="0" x2="918.5" y2="16" class="mj"/>
<text x="920" y="14">2400</text>
<line x1="924.5" y1="12" x2="924.5" y2="16" class="mn"/>
<line x1="930.5" y1="12" x2="930.5" y2="16" class="mn"/>
<line x1="936.5" y1="12" x2="936.5" y2="16" class="mn"/>
<line x1="942.5" y1="12" x2="942.5" y2="16" class="mn"/>
<line x1="948.5" y1="10" x2="948.5" y2="16" class="mn"/>
<line x1="953.5" y1="12" x2="953.5" y2="16" class="mn"/>
<line x1="959.5" y1="12" x2="959.5" y2="16" class="mn"/>
<line x1="965.5" y1="12" x2="965.5" y2="16" class="mn"/>
<line x1="971.5" y1="12" x2="971.5" y2="16" class="mn"/>
<line x1="977.5" y1="0" x2="977.5" y2="16" class="mj"/>
<text x="979" y="14">2600</text>
<line x1="983.5" y1="12" x2="983.5" y2="16" class="mn"/>
<line x1="989.5" y1="12" x2="989.5" y2="16" class="mn"/>
<line x1="994.5" y1="12" x2="994.5" y2="16" class="mn"/>
<line x1="1000.5" y1="12" x2="1000.5" y2="16" class="mn"/>
<line x1="1006.5" y1="10" x2="1006.5" y2="16" class="mn"/>
<line x1="1012.5" y1="12" x2="1012.5" y2="16" class="mn"/>
<line x1="1018.5" y1="12" x2="1018.5" y2="16" class="mn"/>
<line x1="1024.5" y1="12" x2="1024.5" y2="16" class="mn"/>
<line x1="1030.5" y1="12" x2="1030.5" y2="16" class="mn"/>
<line x1="1036.5" y1="0" x2="1036.5" y2="16" class="mj"/>
<text x="1038" y="14">2800</text>
<line x1="1041.5" y1="12" x2="1041.5" y2="16" class="mn"/>
<line x1="1047.5" y1="12" x2="1047.5" y2="16" class="mn"/>
<line x1="1053.5" y1="12" x2="1053.5" y2="16" class="mn"/>
<line x1="1059.5" y1="12" x2="1059.5" y2="16" class="mn"/>
<line x1="1065.5" y1="10" x2="1065.5" y2="16" class="mn"/>
<line x1="1071.5" y1="12" x2="1071.5" y2="16" class="mn"/>
<line x1="1077.5" y1="12" x2="1077.5" y2="16" class="mn"/>
<line x1="1082.5" y1="12" x2="1082.5" y2="16" class="mn"/>
<line x1="1088.5" y1="12" x2="1088.5" y2="16" class="mn"/>
<line x1="1094.5" y1="0" x2="1094.5" y2="16" class="mj"/>
<text x="1096" y="14">3000</text>
<line x1="1100.5" y1="12" x2="1100.5" y2="16" class="mn"/>
<line x1="1106.5" y1="12" x2="1106.5" y2="16" class="mn"/>
<line x1="1112.5" y1="12" x2="1112.5" y2="16" class="mn"/>
<line x1="1118.5" y1="12" x2="1118.5" y2="16" class="mn"/>
<line x1="1124.5" y1="10" x2="1124.5" y2="16" class="mn"/>
<line x1="1129.5" y1="12" x2="1129.5" y2="16" class="mn"/>
<line x1="1135.5" y1="12" x2="1135.5" y2="16" class="mn"/>
<line x1="1141.5" y1="12" x2="1141.5" y2="16" class="mn"/>
<line x1="1147.5" y1="12" x2="1147.5" y2="16" class="mn"/>
<line x1="1153.5" y1="0" x2="1153.5" y2="16" class="mj"/>
<text x="1155" y="14">3200</text>
<line x1="1159.5" y1="12" x2="1159.5" y2="16" class="mn"/>
<line x1="1165.5" y1="12" x2="1165.5" y2="16" class="mn"/>
<line x1="1170.5" y1="12" x2="1170.5" y2="16" class="mn"/>
<line x1="1176.5" y1="12" x2="1176.5" y2="16" class="mn"/>
<line x1="1182.5" y1="10" x2="1182.5" y2="16" class="mn"/>
<line x1="1188.5" y1="12" x2="1188.5" y2="16" class="mn"/>
<line x1="1194.5" y1="12" x2="1194.5" y2="16" class="mn"/>
<line x1="1200.5" y1="12" x2="1200.5" y2="16" class="mn"/>
<line x1="1206.5" y1="12" x2="1206.5" y2="16" class="mn"/>
<line x1="1212.5" y1="0" x2="1212.5" y2="16" class="mj"/>
<text x="1214" y="14">3400</text>
<line x1="1217.5" y1="12" x2="1217.5" y2="16" class="mn"/>
<line x1="1223.5" y1="12" x2="1223.5" y2="16" class="mn"/>
<line x1="1229.5" y1="12" x2="1229.5" y2="16" class="mn"/>
<line x1="1235.5" y1="12" x2="1235.5" y2="16" class="mn"/>
<line x1="1241.5" y1="10" x2="1241.5" y2="16" class="mn"/>
<line x1="1247.5" y1="12" x2="1247.5" y2="16" class="mn"/>
<line x1="1253.5" y1="12" x2="1253.5" y2="16" class="mn"/>
<line x1="1259.5" y1="12" x2="1259.5" y2="16" class="mn"/>
<line x1="1264.5" y1="12" x2="1264.5" y2="16" class="mn"/>
<line x1="1270.5" y1="0" x2="1270.5" y2="16" class="mj"/>
<text x="1272" y="14">3600</text>
<line x1="1276.5" y1="12" x2="1276.5" y2="16" class="mn"/>
<line x1="1282.5" y1="12" x2="1282.5" y2="16" class="mn"/>
<line x1="1288.5" y1="12" x2="1288.5" y2="16" class="mn"/>
<line x1="1294.5" y1="12" x2="1294.5" y2="16" class="mn"/>
<line x1="1300.5" y1="10" x2="1300.5" y2="16" class="mn"/>
<line x1="1305.5" y1="12" x2="1305.5" y2="16" class="mn"/>
<line x1="1311.5" y1="12" x2="1311.5" y2="16" class="mn"/>
<line x1="1317.5" y1="12" x2="1317.5" y2="16" class="mn"/>
<line x1="1323.5" y1="12" x2="1323.5" y2="16" class="mn"/>
<line x1="1329.5" y1="0" x2="1329.5" y2="16" class="mj"/>
<text x="1331" y="14">3800</text>
<line x1="1335.5" y1="12" x2="1335.5" y2="16" class="mn"/>
<line x1="1341.5" y1="12" x2="1341.5" y2="16" class="mn"/>
<line x1="1347.5" y1="12" x2="1347.5" y2="16" class="mn"/>
<line x1="1352.5" y1="12" x2="1352.5" y2="16" class="mn"/>
<line x1="1358.5" y1="10" x2="1358.5" y2="16" class="mn"/>
<line x1="1364.5" y1="12" x2="1364.5" y2="16" class="mn"/>
<line x1="1370.5" y1="12" x2="1370.5" y2="16" class="mn"/>
<line x1="1376.5" y1="12" x2="1376.5" y2="16" class="mn"/>
<line x1="1382.5" y1="12" x2="1382.5" y2="16" class="mn"/>
<line x1="1388.5" y1="0" x2="1388.5" y2="16" class="mj"/>
<text x="1390" y="14">4000</text>
<line x1="1393.5" y1="12" x2="1393.5" y2="16" class="mn"/>
<line x1="1399.5" y1="12" x2="1399.5" y2="16" class="mn"/>
<line x1="1405.5" y1="12" x2="1405.5" y2="16" class="mn"/>
<line x1="1411.5" y1="12" x2="1411.5" y2="16" class="mn"/>
<line x1="1417.5" y1="10" x2="1417.5" y2="16" class="mn"/>
<line x1="1423.5" y1="12" x2="1423.5" y2="16" class="mn"/>
<line x1="1429.5" y1="12" x2="1429.5" y2="16" class="mn"/>
<line x1="1435.5" y1="12" x2="1435.5" y2="16" class="mn"/>
<line x1="1440.5" y1="12" x2="1440.5" y2="16" class="mn"/>
<line x1="1446.5" y1="0" x2="1446.5" y2="16" class="mj"/>
<text x="1448" y="14">4200</text>
<line x1="1452.5" y1="12" x2="1452.5" y2="16" class="mn"/>
<line x1="1458.5" y1="12" x2="1458.5" y2="16" class="mn"/>
<line x1="1464.5" y1="12" x2="1464.5" y2="16" class="mn"/>
<line x1="1470.5" y1="12" x2="1470.5" y2="16" class="mn"/>
<line x1="1476.5" y1="10" x2="1476.5" y2="16" class="mn"/>
<line x1="1481.5" y1="12" x2="1481.5" y2="16" class="mn"/>
<line x1="1487.5" y1="12" x2="1487.5" y2="16" class="mn"/>
<line x1="1493.5" y1="12" x2="1493.5" y2="16" class="mn"/>
<line x1="1499.5" y1="12" x2="1499.5" y2="16" class="mn"/>
<line x1="1505.5" y1="0" x2="1505.5" y2="16" class="mj"/>
<text x="1507" y="14">4400</text>
<line x1="1511.5" y1="12" x2="1511.5" y2="16" class="mn"/>
<line x1="1517.5" y1="12" x2="1517.5" y2="16" class="mn"/>
<line x1="1523.5" y1="12" x2="1523.5" y2="16" class="mn"/>
<line x1="1528.5" y1="12" x2="1528.5" y2="16" class="mn"/>
<line x1="1534.5" y1="10" x2="1534.5" y2="16" class="mn"/>
<rect x="0" y="0" width="17" height="17" fill="#2a2a2a"/><line x1="12.5" y1="0" x2="12.5" y2="16" stroke="#5c5c5c" stroke-dasharray="1 1"/><line x1="0" y1="12.5" x2="16" y2="12.5" stroke="#5c5c5c" stroke-dasharray="1 1"/>
</svg>
<svg class="abs" id="rleft" width="17" height="927" viewBox="0 0 17 927" style="top:0">
<rect x="0" y="17" width="17" height="910" fill="#2a2a2a"/>
<g clip-path="url(#lc)">
<text x="1" y="0">2</text>
<text x="1" y="12">0</text>
<text x="1" y="24">0</text>
<line x1="10" y1="18.5" x2="16" y2="18.5" class="mn"/>
<line x1="12" y1="24.5" x2="16" y2="24.5" class="mn"/>
<line x1="12" y1="29.5" x2="16" y2="29.5" class="mn"/>
<line x1="12" y1="35.5" x2="16" y2="35.5" class="mn"/>
<line x1="12" y1="41.5" x2="16" y2="41.5" class="mn"/>
<line x1="0" y1="47.5" x2="16" y2="47.5" class="mj"/>
<text x="1" y="59">0</text>
<line x1="12" y1="53.5" x2="16" y2="53.5" class="mn"/>
<line x1="12" y1="59.5" x2="16" y2="59.5" class="mn"/>
<line x1="12" y1="65.5" x2="16" y2="65.5" class="mn"/>
<line x1="12" y1="70.5" x2="16" y2="70.5" class="mn"/>
<line x1="10" y1="76.5" x2="16" y2="76.5" class="mn"/>
<line x1="12" y1="82.5" x2="16" y2="82.5" class="mn"/>
<line x1="12" y1="88.5" x2="16" y2="88.5" class="mn"/>
<line x1="12" y1="94.5" x2="16" y2="94.5" class="mn"/>
<line x1="12" y1="100.5" x2="16" y2="100.5" class="mn"/>
<line x1="0" y1="106.5" x2="16" y2="106.5" class="mj"/>
<text x="1" y="118">2</text>
<text x="1" y="130">0</text>
<text x="1" y="142">0</text>
<line x1="12" y1="112.5" x2="16" y2="112.5" class="mn"/>
<line x1="12" y1="117.5" x2="16" y2="117.5" class="mn"/>
<line x1="12" y1="123.5" x2="16" y2="123.5" class="mn"/>
<line x1="12" y1="129.5" x2="16" y2="129.5" class="mn"/>
<line x1="10" y1="135.5" x2="16" y2="135.5" class="mn"/>
<line x1="12" y1="141.5" x2="16" y2="141.5" class="mn"/>
<line x1="12" y1="147.5" x2="16" y2="147.5" class="mn"/>
<line x1="12" y1="153.5" x2="16" y2="153.5" class="mn"/>
<line x1="12" y1="158.5" x2="16" y2="158.5" class="mn"/>
<line x1="0" y1="164.5" x2="16" y2="164.5" class="mj"/>
<text x="1" y="176">4</text>
<text x="1" y="188">0</text>
<text x="1" y="200">0</text>
<line x1="12" y1="170.5" x2="16" y2="170.5" class="mn"/>
<line x1="12" y1="176.5" x2="16" y2="176.5" class="mn"/>
<line x1="12" y1="182.5" x2="16" y2="182.5" class="mn"/>
<line x1="12" y1="188.5" x2="16" y2="188.5" class="mn"/>
<line x1="10" y1="194.5" x2="16" y2="194.5" class="mn"/>
<line x1="12" y1="200.5" x2="16" y2="200.5" class="mn"/>
<line x1="12" y1="205.5" x2="16" y2="205.5" class="mn"/>
<line x1="12" y1="211.5" x2="16" y2="211.5" class="mn"/>
<line x1="12" y1="217.5" x2="16" y2="217.5" class="mn"/>
<line x1="0" y1="223.5" x2="16" y2="223.5" class="mj"/>
<text x="1" y="235">6</text>
<text x="1" y="247">0</text>
<text x="1" y="259">0</text>
<line x1="12" y1="229.5" x2="16" y2="229.5" class="mn"/>
<line x1="12" y1="235.5" x2="16" y2="235.5" class="mn"/>
<line x1="12" y1="241.5" x2="16" y2="241.5" class="mn"/>
<line x1="12" y1="247.5" x2="16" y2="247.5" class="mn"/>
<line x1="10" y1="252.5" x2="16" y2="252.5" class="mn"/>
<line x1="12" y1="258.5" x2="16" y2="258.5" class="mn"/>
<line x1="12" y1="264.5" x2="16" y2="264.5" class="mn"/>
<line x1="12" y1="270.5" x2="16" y2="270.5" class="mn"/>
<line x1="12" y1="276.5" x2="16" y2="276.5" class="mn"/>
<line x1="0" y1="282.5" x2="16" y2="282.5" class="mj"/>
<text x="1" y="294">8</text>
<text x="1" y="306">0</text>
<text x="1" y="318">0</text>
<line x1="12" y1="288.5" x2="16" y2="288.5" class="mn"/>
<line x1="12" y1="293.5" x2="16" y2="293.5" class="mn"/>
<line x1="12" y1="299.5" x2="16" y2="299.5" class="mn"/>
<line x1="12" y1="305.5" x2="16" y2="305.5" class="mn"/>
<line x1="10" y1="311.5" x2="16" y2="311.5" class="mn"/>
<line x1="12" y1="317.5" x2="16" y2="317.5" class="mn"/>
<line x1="12" y1="323.5" x2="16" y2="323.5" class="mn"/>
<line x1="12" y1="329.5" x2="16" y2="329.5" class="mn"/>
<line x1="12" y1="335.5" x2="16" y2="335.5" class="mn"/>
<line x1="0" y1="340.5" x2="16" y2="340.5" class="mj"/>
<text x="1" y="352">1</text>
<text x="1" y="364">0</text>
<text x="1" y="376">0</text>
<text x="1" y="388">0</text>
<line x1="12" y1="346.5" x2="16" y2="346.5" class="mn"/>
<line x1="12" y1="352.5" x2="16" y2="352.5" class="mn"/>
<line x1="12" y1="358.5" x2="16" y2="358.5" class="mn"/>
<line x1="12" y1="364.5" x2="16" y2="364.5" class="mn"/>
<line x1="10" y1="370.5" x2="16" y2="370.5" class="mn"/>
<line x1="12" y1="376.5" x2="16" y2="376.5" class="mn"/>
<line x1="12" y1="381.5" x2="16" y2="381.5" class="mn"/>
<line x1="12" y1="387.5" x2="16" y2="387.5" class="mn"/>
<line x1="12" y1="393.5" x2="16" y2="393.5" class="mn"/>
<line x1="0" y1="399.5" x2="16" y2="399.5" class="mj"/>
<text x="1" y="411">1</text>
<text x="1" y="423">2</text>
<text x="1" y="435">0</text>
<text x="1" y="447">0</text>
<line x1="12" y1="405.5" x2="16" y2="405.5" class="mn"/>
<line x1="12" y1="411.5" x2="16" y2="411.5" class="mn"/>
<line x1="12" y1="417.5" x2="16" y2="417.5" class="mn"/>
<line x1="12" y1="423.5" x2="16" y2="423.5" class="mn"/>
<line x1="10" y1="428.5" x2="16" y2="428.5" class="mn"/>
<line x1="12" y1="434.5" x2="16" y2="434.5" class="mn"/>
<line x1="12" y1="440.5" x2="16" y2="440.5" class="mn"/>
<line x1="12" y1="446.5" x2="16" y2="446.5" class="mn"/>
<line x1="12" y1="452.5" x2="16" y2="452.5" class="mn"/>
<line x1="0" y1="458.5" x2="16" y2="458.5" class="mj"/>
<text x="1" y="470">1</text>
<text x="1" y="482">4</text>
<text x="1" y="494">0</text>
<text x="1" y="506">0</text>
<line x1="12" y1="464.5" x2="16" y2="464.5" class="mn"/>
<line x1="12" y1="469.5" x2="16" y2="469.5" class="mn"/>
<line x1="12" y1="475.5" x2="16" y2="475.5" class="mn"/>
<line x1="12" y1="481.5" x2="16" y2="481.5" class="mn"/>
<line x1="10" y1="487.5" x2="16" y2="487.5" class="mn"/>
<line x1="12" y1="493.5" x2="16" y2="493.5" class="mn"/>
<line x1="12" y1="499.5" x2="16" y2="499.5" class="mn"/>
<line x1="12" y1="505.5" x2="16" y2="505.5" class="mn"/>
<line x1="12" y1="511.5" x2="16" y2="511.5" class="mn"/>
<line x1="0" y1="516.5" x2="16" y2="516.5" class="mj"/>
<text x="1" y="528">1</text>
<text x="1" y="540">6</text>
<text x="1" y="552">0</text>
<text x="1" y="564">0</text>
<line x1="12" y1="522.5" x2="16" y2="522.5" class="mn"/>
<line x1="12" y1="528.5" x2="16" y2="528.5" class="mn"/>
<line x1="12" y1="534.5" x2="16" y2="534.5" class="mn"/>
<line x1="12" y1="540.5" x2="16" y2="540.5" class="mn"/>
<line x1="10" y1="546.5" x2="16" y2="546.5" class="mn"/>
<line x1="12" y1="552.5" x2="16" y2="552.5" class="mn"/>
<line x1="12" y1="558.5" x2="16" y2="558.5" class="mn"/>
<line x1="12" y1="563.5" x2="16" y2="563.5" class="mn"/>
<line x1="12" y1="569.5" x2="16" y2="569.5" class="mn"/>
<line x1="0" y1="575.5" x2="16" y2="575.5" class="mj"/>
<text x="1" y="587">1</text>
<text x="1" y="599">8</text>
<text x="1" y="611">0</text>
<text x="1" y="623">0</text>
<line x1="12" y1="581.5" x2="16" y2="581.5" class="mn"/>
<line x1="12" y1="587.5" x2="16" y2="587.5" class="mn"/>
<line x1="12" y1="593.5" x2="16" y2="593.5" class="mn"/>
<line x1="12" y1="599.5" x2="16" y2="599.5" class="mn"/>
<line x1="10" y1="604.5" x2="16" y2="604.5" class="mn"/>
<line x1="12" y1="610.5" x2="16" y2="610.5" class="mn"/>
<line x1="12" y1="616.5" x2="16" y2="616.5" class="mn"/>
<line x1="12" y1="622.5" x2="16" y2="622.5" class="mn"/>
<line x1="12" y1="628.5" x2="16" y2="628.5" class="mn"/>
<line x1="0" y1="634.5" x2="16" y2="634.5" class="mj"/>
<text x="1" y="646">2</text>
<text x="1" y="658">0</text>
<text x="1" y="670">0</text>
<text x="1" y="682">0</text>
<line x1="12" y1="640.5" x2="16" y2="640.5" class="mn"/>
<line x1="12" y1="646.5" x2="16" y2="646.5" class="mn"/>
<line x1="12" y1="651.5" x2="16" y2="651.5" class="mn"/>
<line x1="12" y1="657.5" x2="16" y2="657.5" class="mn"/>
<line x1="10" y1="663.5" x2="16" y2="663.5" class="mn"/>
<line x1="12" y1="669.5" x2="16" y2="669.5" class="mn"/>
<line x1="12" y1="675.5" x2="16" y2="675.5" class="mn"/>
<line x1="12" y1="681.5" x2="16" y2="681.5" class="mn"/>
<line x1="12" y1="687.5" x2="16" y2="687.5" class="mn"/>
<line x1="0" y1="692.5" x2="16" y2="692.5" class="mj"/>
<text x="1" y="704">2</text>
<text x="1" y="716">2</text>
<text x="1" y="728">0</text>
<text x="1" y="740">0</text>
<line x1="12" y1="698.5" x2="16" y2="698.5" class="mn"/>
<line x1="12" y1="704.5" x2="16" y2="704.5" class="mn"/>
<line x1="12" y1="710.5" x2="16" y2="710.5" class="mn"/>
<line x1="12" y1="716.5" x2="16" y2="716.5" class="mn"/>
<line x1="10" y1="722.5" x2="16" y2="722.5" class="mn"/>
<line x1="12" y1="728.5" x2="16" y2="728.5" class="mn"/>
<line x1="12" y1="734.5" x2="16" y2="734.5" class="mn"/>
<line x1="12" y1="739.5" x2="16" y2="739.5" class="mn"/>
<line x1="12" y1="745.5" x2="16" y2="745.5" class="mn"/>
<line x1="0" y1="751.5" x2="16" y2="751.5" class="mj"/>
<text x="1" y="763">2</text>
<text x="1" y="775">4</text>
<text x="1" y="787">0</text>
<text x="1" y="799">0</text>
<line x1="12" y1="757.5" x2="16" y2="757.5" class="mn"/>
<line x1="12" y1="763.5" x2="16" y2="763.5" class="mn"/>
<line x1="12" y1="769.5" x2="16" y2="769.5" class="mn"/>
<line x1="12" y1="775.5" x2="16" y2="775.5" class="mn"/>
<line x1="10" y1="780.5" x2="16" y2="780.5" class="mn"/>
<line x1="12" y1="786.5" x2="16" y2="786.5" class="mn"/>
<line x1="12" y1="792.5" x2="16" y2="792.5" class="mn"/>
<line x1="12" y1="798.5" x2="16" y2="798.5" class="mn"/>
<line x1="12" y1="804.5" x2="16" y2="804.5" class="mn"/>
<line x1="0" y1="810.5" x2="16" y2="810.5" class="mj"/>
<text x="1" y="822">2</text>
<text x="1" y="834">6</text>
<text x="1" y="846">0</text>
<text x="1" y="858">0</text>
<line x1="12" y1="816.5" x2="16" y2="816.5" class="mn"/>
<line x1="12" y1="822.5" x2="16" y2="822.5" class="mn"/>
<line x1="12" y1="827.5" x2="16" y2="827.5" class="mn"/>
<line x1="12" y1="833.5" x2="16" y2="833.5" class="mn"/>
<line x1="10" y1="839.5" x2="16" y2="839.5" class="mn"/>
<line x1="12" y1="845.5" x2="16" y2="845.5" class="mn"/>
<line x1="12" y1="851.5" x2="16" y2="851.5" class="mn"/>
<line x1="12" y1="857.5" x2="16" y2="857.5" class="mn"/>
<line x1="12" y1="863.5" x2="16" y2="863.5" class="mn"/>
<line x1="0" y1="869.5" x2="16" y2="869.5" class="mj"/>
<text x="1" y="881">2</text>
<text x="1" y="893">8</text>
<text x="1" y="905">0</text>
<text x="1" y="917">0</text>
<line x1="12" y1="874.5" x2="16" y2="874.5" class="mn"/>
<line x1="12" y1="880.5" x2="16" y2="880.5" class="mn"/>
<line x1="12" y1="886.5" x2="16" y2="886.5" class="mn"/>
<line x1="12" y1="892.5" x2="16" y2="892.5" class="mn"/>
<line x1="10" y1="898.5" x2="16" y2="898.5" class="mn"/>
<line x1="12" y1="904.5" x2="16" y2="904.5" class="mn"/>
<line x1="12" y1="910.5" x2="16" y2="910.5" class="mn"/>
<line x1="12" y1="915.5" x2="16" y2="915.5" class="mn"/>
<line x1="12" y1="921.5" x2="16" y2="921.5" class="mn"/>
</g>
<defs><clipPath id="lc"><rect x="0" y="17" width="17" height="910"/></clipPath></defs>
</svg>
<svg class="abs" style="left:0;top:0" width="1557" height="943"><line x1="1536.5" y1="17" x2="1536.5" y2="926" stroke="#0e0e0e" stroke-dasharray="1 1"/><line x1="17" y1="925.5" x2="1536" y2="925.5" stroke="#0e0e0e" stroke-dasharray="1 1"/></svg>
<div class="abs" id="status"></div>
<div class="abs" style="left:1541px;top:927px;width:16px;height:16px;background:#323232"></div>
<div class="abs" id="sbox"></div>
<div class="abs" id="sline"></div>
<div class="abs" id="zoom">29.34%</div>
<div class="abs" id="dims">3850 px x 2900 px (320 ppp)</div>
<svg class="abs" style="left:270px;top:930px" width="8" height="12" viewBox="0 0 8 12"><path d="M2 1 L6 6 L2 11" stroke="#bdbdbd" stroke-width="1" fill="none"/></svg>
</div></body></html>
